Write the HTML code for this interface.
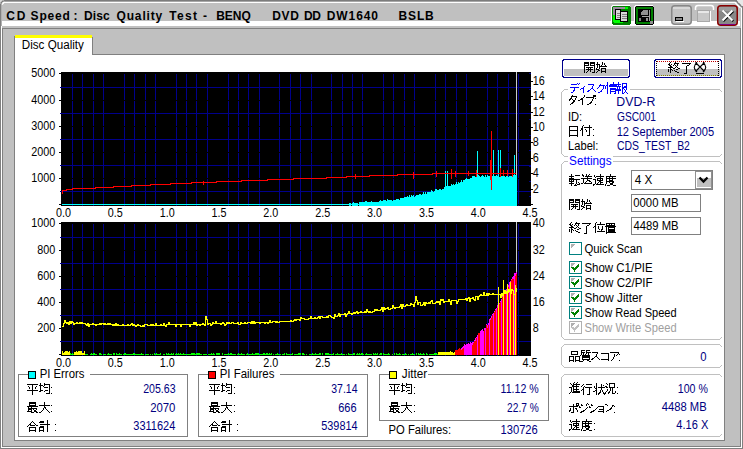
<!DOCTYPE html>
<html><head><meta charset="utf-8"><style>
html,body{margin:0;padding:0;width:743px;height:449px;overflow:hidden;background:#c0c0c0}
svg{display:block}
text{font-family:"Liberation Sans", sans-serif}
</style></head><body>
<svg width="743" height="449" viewBox="0 0 743 449" shape-rendering="crispEdges">
<rect x="0" y="0" width="743" height="449" fill="#c0c0c0" />
<rect x="0" y="0" width="743" height="1" fill="#7c7c7c" />
<rect x="1" y="1" width="741" height="1" fill="#a8a8a8" />
<rect x="2" y="2" width="739" height="1" fill="#ffffff" />
<rect x="0" y="0" width="1" height="449" fill="#808080" />
<rect x="1" y="1" width="1" height="25" fill="#b0b0b0" />
<rect x="1" y="26" width="1" height="422" fill="#ffffff" />
<rect x="2" y="28" width="1" height="419" fill="#808080" />
<rect x="742" y="0" width="1" height="449" fill="#808080" />
<rect x="741" y="2" width="1" height="446" fill="#ffffff" />
<rect x="740" y="28" width="1" height="419" fill="#808080" />
<rect x="0" y="448" width="743" height="1" fill="#808080" />
<rect x="1" y="447" width="741" height="1" fill="#ffffff" />
<rect x="2" y="446" width="739" height="1" fill="#808080" />
<path d="M736 0 L743 0 L743 7 Z" fill="#e8e8e8"/>
<path d="M735.5 0.5 L742.5 7.5" stroke="#7c7c7c" stroke-width="1.2" shape-rendering="geometricPrecision"/>
<path d="M735 2.5 L740.5 8" stroke="#ffffff" stroke-width="1.2" shape-rendering="geometricPrecision"/>
<path d="M0 0 L4 0 L0 4 Z" fill="#d8d8d8"/>
<path d="M3.5 0.5 L0.5 3.5" stroke="#7c7c7c" stroke-width="1.2" shape-rendering="geometricPrecision"/>
<path d="M4.5 2 L2 4.5" stroke="#ffffff" stroke-width="1.2" shape-rendering="geometricPrecision"/>
<rect x="2" y="21" width="738" height="5" fill="#ffffff" />
<rect x="2" y="28" width="739" height="1" fill="#808080" />
<text x="6.21" y="19.6" font-size="12" fill="#000" text-anchor="start" textLength="19.3" lengthAdjust="spacing" font-weight="bold" >CD</text>
<text x="30.55" y="19.6" font-size="12" fill="#000" text-anchor="start" textLength="39.34" lengthAdjust="spacing" font-weight="bold" >Speed</text>
<text x="73.45" y="19.6" font-size="12" fill="#000" text-anchor="start" textLength="4.81" lengthAdjust="spacing" font-weight="bold" >:</text>
<text x="84.1" y="19.6" font-size="12" fill="#000" text-anchor="start" textLength="25.65" lengthAdjust="spacing" font-weight="bold" >Disc</text>
<text x="116.51" y="19.6" font-size="12" fill="#000" text-anchor="start" textLength="45.76" lengthAdjust="spacing" font-weight="bold" >Quality</text>
<text x="169.37" y="19.6" font-size="12" fill="#000" text-anchor="start" textLength="27.68" lengthAdjust="spacing" font-weight="bold" >Test</text>
<text x="202.93" y="19.6" font-size="12" fill="#000" text-anchor="start" textLength="4.95" lengthAdjust="spacing" font-weight="bold" >-</text>
<text x="216.2" y="19.6" font-size="12" fill="#000" text-anchor="start" textLength="34.61" lengthAdjust="spacing" font-weight="bold" >BENQ</text>
<text x="272.2" y="19.6" font-size="12" fill="#000" text-anchor="start" textLength="26.61" lengthAdjust="spacing" font-weight="bold" >DVD</text>
<text x="304.0" y="19.6" font-size="12" fill="#000" text-anchor="start" textLength="16.91" lengthAdjust="spacing" font-weight="bold" >DD</text>
<text x="326.8" y="19.6" font-size="12" fill="#000" text-anchor="start" textLength="51.19" lengthAdjust="spacing" font-weight="bold" >DW1640</text>
<text x="398.5" y="19.6" font-size="12" fill="#000" text-anchor="start" textLength="35.25" lengthAdjust="spacing" font-weight="bold" >BSLB</text>
<rect x="612" y="5" width="18" height="1" fill="#ffffff" />
<rect x="611" y="6" width="1" height="18" fill="#ffffff" />
<rect x="612" y="6" width="19" height="19" rx="2.5" fill="#008000"/>
<path d="M613 8 Q613 7 614 7 L628 7 L628 9 L617 9 L617 20 L623 20 L623 23 L614 23 L613 22 Z" fill="#00ff00"/>
<rect x="613" y="7" width="12" height="2" fill="#9a8aa0" />
<rect x="613" y="7" width="2" height="8" fill="#9a8aa0" />
<rect x="615.5" y="9.5" width="5" height="10" fill="#d8d8d8" stroke="#000"/>
<rect x="617" y="13" width="3" height="1" fill="#808080" />
<rect x="617" y="15" width="3" height="1" fill="#808080" />
<rect x="617" y="17" width="3" height="1" fill="#808080" />
<rect x="620.5" y="11.5" width="7" height="10" fill="#d8d8d8" stroke="#000"/>
<rect x="622" y="14" width="5" height="1" fill="#808080" />
<rect x="622" y="16" width="5" height="1" fill="#808080" />
<rect x="622" y="18" width="5" height="1" fill="#808080" />
<rect x="635" y="5" width="18" height="1" fill="#ffffff" />
<rect x="634" y="6" width="1" height="18" fill="#ffffff" />
<rect x="635" y="6" width="19" height="19" rx="2.5" fill="#000"/>
<rect x="636" y="7" width="17" height="17" fill="#008000" />
<rect x="638" y="9" width="13" height="13" fill="#000" />
<path d="M641 12 L643 10 L648 10 L648 15 L641 15 Z" fill="#909090"/>
<rect x="642" y="16" width="8" height="1" fill="#a0a0a0" />
<rect x="649" y="10" width="1" height="11" fill="#a0a0a0" />
<rect x="639" y="18" width="2" height="3" fill="#808080" />
<rect x="646" y="18" width="2" height="3" fill="#909090" />
<rect x="650" y="21" width="3" height="3" fill="#909090" />
<rect x="671.75" y="5.75" width="19.5" height="18.5" rx="3" fill="#c4c4c4" stroke="#888" stroke-width="1.5" shape-rendering="geometricPrecision"/>
<rect x="673" y="7" width="17" height="2" fill="#d8d8d8" />
<rect x="675.5" y="17.5" width="7" height="3" fill="#8a8a8a" stroke="#000"/>
<rect x="676" y="21" width="8" height="1" fill="#ffffff" />
<path d="M695.5 10 L695.5 8 Q695.5 5.5 698 5.5 L711 5.5 Q713.5 5.5 713.5 8 L713.5 10" fill="none" stroke="#fff" stroke-width="1.5" shape-rendering="geometricPrecision"/>
<rect x="697.5" y="10.5" width="12" height="11" fill="#c8c8c8" stroke="#a8a8a8"/>
<rect x="698" y="11" width="11" height="2" fill="#e8e8e8" />
<rect x="697" y="22" width="13" height="1" fill="#ffffff" />
<rect x="710" y="11" width="1" height="12" fill="#ffffff" />
<rect x="717.75" y="5.75" width="19.5" height="19.5" rx="3" fill="#888" stroke="#8a0000" stroke-width="1.5" shape-rendering="geometricPrecision"/>
<rect x="719" y="7" width="17" height="4" fill="#9c9c9c" />
<path d="M722.5 10.5 L732.5 20.5 M732.5 10.5 L722.5 20.5" stroke="#000" stroke-width="2.2" transform="translate(0.7,0.7)" shape-rendering="geometricPrecision"/>
<path d="M722.5 10.5 L732.5 20.5 M732.5 10.5 L722.5 20.5" stroke="#fff" stroke-width="2" shape-rendering="geometricPrecision"/>
<rect x="720" y="24" width="15" height="1" fill="#800080" />
<rect x="15" y="38" width="77" height="17" fill="#ffffff" />
<rect x="15" y="35" width="77" height="3" fill="#ffff00" />
<rect x="14" y="36" width="1" height="19" fill="#808080" />
<rect x="92" y="37" width="1" height="18" fill="#808080" />
<text x="21.79" y="49" font-size="12" fill="#000" text-anchor="start" textLength="62.13" lengthAdjust="spacingAndGlyphs" >Disc Quality</text>
<rect x="15" y="55" width="709" height="385" fill="#ffffff" />
<rect x="14" y="54" width="1" height="387" fill="#808080" />
<rect x="92" y="54" width="633" height="1" fill="#808080" />
<rect x="724" y="54" width="1" height="387" fill="#808080" />
<rect x="14" y="440" width="711" height="1" fill="#808080" />
<rect x="61" y="72" width="470" height="134" fill="#000" />
<rect x="72" y="74" width="1" height="132" fill="#00008c" />
<rect x="82" y="74" width="1" height="132" fill="#00008c" />
<rect x="93" y="74" width="1" height="132" fill="#00008c" />
<rect x="103" y="74" width="1" height="132" fill="#00008c" />
<rect x="124" y="74" width="1" height="132" fill="#00008c" />
<rect x="134" y="74" width="1" height="132" fill="#00008c" />
<rect x="145" y="74" width="1" height="132" fill="#00008c" />
<rect x="155" y="74" width="1" height="132" fill="#00008c" />
<rect x="176" y="74" width="1" height="132" fill="#00008c" />
<rect x="186" y="74" width="1" height="132" fill="#00008c" />
<rect x="196" y="74" width="1" height="132" fill="#00008c" />
<rect x="207" y="74" width="1" height="132" fill="#00008c" />
<rect x="228" y="74" width="1" height="132" fill="#00008c" />
<rect x="238" y="74" width="1" height="132" fill="#00008c" />
<rect x="248" y="74" width="1" height="132" fill="#00008c" />
<rect x="259" y="74" width="1" height="132" fill="#00008c" />
<rect x="279" y="74" width="1" height="132" fill="#00008c" />
<rect x="290" y="74" width="1" height="132" fill="#00008c" />
<rect x="300" y="74" width="1" height="132" fill="#00008c" />
<rect x="311" y="74" width="1" height="132" fill="#00008c" />
<rect x="331" y="74" width="1" height="132" fill="#00008c" />
<rect x="342" y="74" width="1" height="132" fill="#00008c" />
<rect x="352" y="74" width="1" height="132" fill="#00008c" />
<rect x="362" y="74" width="1" height="132" fill="#00008c" />
<rect x="383" y="74" width="1" height="132" fill="#00008c" />
<rect x="393" y="74" width="1" height="132" fill="#00008c" />
<rect x="404" y="74" width="1" height="132" fill="#00008c" />
<rect x="414" y="74" width="1" height="132" fill="#00008c" />
<rect x="435" y="74" width="1" height="132" fill="#00008c" />
<rect x="445" y="74" width="1" height="132" fill="#00008c" />
<rect x="456" y="74" width="1" height="132" fill="#00008c" />
<rect x="466" y="74" width="1" height="132" fill="#00008c" />
<rect x="487" y="74" width="1" height="132" fill="#00008c" />
<rect x="497" y="74" width="1" height="132" fill="#00008c" />
<rect x="508" y="74" width="1" height="132" fill="#00008c" />
<rect x="518" y="74" width="1" height="132" fill="#00008c" />
<rect x="60" y="87" width="471" height="1" fill="#00008c" />
<rect x="60" y="113" width="471" height="1" fill="#00008c" />
<rect x="60" y="139" width="471" height="1" fill="#00008c" />
<rect x="60" y="165" width="471" height="1" fill="#00008c" />
<rect x="60" y="191" width="471" height="1" fill="#00008c" />
<rect x="61" y="100" width="470" height="1" fill="#000" />
<rect x="61" y="126" width="470" height="1" fill="#000" />
<rect x="61" y="152" width="470" height="1" fill="#000" />
<rect x="61" y="178" width="470" height="1" fill="#000" />
<rect x="61" y="204" width="470" height="1" fill="#000" />
<rect x="59" y="73" width="2" height="1" fill="#000" />
<rect x="59" y="100" width="2" height="1" fill="#000" />
<rect x="59" y="126" width="2" height="1" fill="#000" />
<rect x="59" y="152" width="2" height="1" fill="#000" />
<rect x="59" y="178" width="2" height="1" fill="#000" />
<rect x="59" y="204" width="2" height="1" fill="#000" />
<rect x="61" y="222" width="470" height="134" fill="#000" />
<rect x="72" y="224" width="1" height="132" fill="#00008c" />
<rect x="82" y="224" width="1" height="132" fill="#00008c" />
<rect x="93" y="224" width="1" height="132" fill="#00008c" />
<rect x="103" y="224" width="1" height="132" fill="#00008c" />
<rect x="124" y="224" width="1" height="132" fill="#00008c" />
<rect x="134" y="224" width="1" height="132" fill="#00008c" />
<rect x="145" y="224" width="1" height="132" fill="#00008c" />
<rect x="155" y="224" width="1" height="132" fill="#00008c" />
<rect x="176" y="224" width="1" height="132" fill="#00008c" />
<rect x="186" y="224" width="1" height="132" fill="#00008c" />
<rect x="196" y="224" width="1" height="132" fill="#00008c" />
<rect x="207" y="224" width="1" height="132" fill="#00008c" />
<rect x="228" y="224" width="1" height="132" fill="#00008c" />
<rect x="238" y="224" width="1" height="132" fill="#00008c" />
<rect x="248" y="224" width="1" height="132" fill="#00008c" />
<rect x="259" y="224" width="1" height="132" fill="#00008c" />
<rect x="279" y="224" width="1" height="132" fill="#00008c" />
<rect x="290" y="224" width="1" height="132" fill="#00008c" />
<rect x="300" y="224" width="1" height="132" fill="#00008c" />
<rect x="311" y="224" width="1" height="132" fill="#00008c" />
<rect x="331" y="224" width="1" height="132" fill="#00008c" />
<rect x="342" y="224" width="1" height="132" fill="#00008c" />
<rect x="352" y="224" width="1" height="132" fill="#00008c" />
<rect x="362" y="224" width="1" height="132" fill="#00008c" />
<rect x="383" y="224" width="1" height="132" fill="#00008c" />
<rect x="393" y="224" width="1" height="132" fill="#00008c" />
<rect x="404" y="224" width="1" height="132" fill="#00008c" />
<rect x="414" y="224" width="1" height="132" fill="#00008c" />
<rect x="435" y="224" width="1" height="132" fill="#00008c" />
<rect x="445" y="224" width="1" height="132" fill="#00008c" />
<rect x="456" y="224" width="1" height="132" fill="#00008c" />
<rect x="466" y="224" width="1" height="132" fill="#00008c" />
<rect x="487" y="224" width="1" height="132" fill="#00008c" />
<rect x="497" y="224" width="1" height="132" fill="#00008c" />
<rect x="508" y="224" width="1" height="132" fill="#00008c" />
<rect x="518" y="224" width="1" height="132" fill="#00008c" />
<rect x="60" y="237" width="471" height="1" fill="#00008c" />
<rect x="60" y="263" width="471" height="1" fill="#00008c" />
<rect x="60" y="289" width="471" height="1" fill="#00008c" />
<rect x="60" y="315" width="471" height="1" fill="#00008c" />
<rect x="60" y="341" width="471" height="1" fill="#00008c" />
<rect x="61" y="250" width="470" height="1" fill="#000" />
<rect x="61" y="276" width="470" height="1" fill="#000" />
<rect x="61" y="302" width="470" height="1" fill="#000" />
<rect x="61" y="328" width="470" height="1" fill="#000" />
<rect x="61" y="354" width="470" height="1" fill="#000" />
<rect x="59" y="223" width="2" height="1" fill="#000" />
<rect x="59" y="250" width="2" height="1" fill="#000" />
<rect x="59" y="276" width="2" height="1" fill="#000" />
<rect x="59" y="302" width="2" height="1" fill="#000" />
<rect x="59" y="328" width="2" height="1" fill="#000" />
<rect x="59" y="354" width="2" height="1" fill="#000" />
<rect x="516" y="72" width="1" height="134" fill="#c8c8c8" />
<rect x="62" y="204" width="1" height="1" fill="#00ffff" />
<rect x="63" y="204" width="1" height="1" fill="#00ffff" />
<rect x="64" y="204" width="1" height="1" fill="#00ffff" />
<rect x="65" y="204" width="1" height="1" fill="#00ffff" />
<rect x="66" y="204" width="1" height="1" fill="#00ffff" />
<rect x="67" y="204" width="1" height="1" fill="#00ffff" />
<rect x="68" y="204" width="1" height="1" fill="#00ffff" />
<rect x="69" y="204" width="1" height="1" fill="#00ffff" />
<rect x="70" y="204" width="1" height="1" fill="#00ffff" />
<rect x="71" y="204" width="1" height="1" fill="#00ffff" />
<rect x="72" y="204" width="1" height="1" fill="#00ffff" />
<rect x="73" y="204" width="1" height="1" fill="#00ffff" />
<rect x="74" y="204" width="1" height="1" fill="#00ffff" />
<rect x="75" y="204" width="1" height="1" fill="#00ffff" />
<rect x="76" y="204" width="1" height="1" fill="#00ffff" />
<rect x="77" y="204" width="1" height="1" fill="#00ffff" />
<rect x="78" y="204" width="1" height="1" fill="#00ffff" />
<rect x="79" y="204" width="1" height="1" fill="#00ffff" />
<rect x="80" y="204" width="1" height="1" fill="#00ffff" />
<rect x="81" y="204" width="1" height="1" fill="#00ffff" />
<rect x="82" y="204" width="1" height="1" fill="#00ffff" />
<rect x="83" y="204" width="1" height="1" fill="#00ffff" />
<rect x="84" y="204" width="1" height="1" fill="#00ffff" />
<rect x="85" y="204" width="1" height="1" fill="#00ffff" />
<rect x="86" y="204" width="1" height="1" fill="#00ffff" />
<rect x="87" y="204" width="1" height="1" fill="#00ffff" />
<rect x="88" y="204" width="1" height="1" fill="#00ffff" />
<rect x="89" y="204" width="1" height="1" fill="#00ffff" />
<rect x="90" y="204" width="1" height="1" fill="#00ffff" />
<rect x="91" y="204" width="1" height="1" fill="#00ffff" />
<rect x="92" y="204" width="1" height="1" fill="#00ffff" />
<rect x="93" y="204" width="1" height="1" fill="#00ffff" />
<rect x="94" y="204" width="1" height="1" fill="#00ffff" />
<rect x="95" y="204" width="1" height="1" fill="#00ffff" />
<rect x="96" y="204" width="1" height="1" fill="#00ffff" />
<rect x="97" y="204" width="1" height="1" fill="#00ffff" />
<rect x="98" y="204" width="1" height="1" fill="#00ffff" />
<rect x="99" y="204" width="1" height="1" fill="#00ffff" />
<rect x="100" y="204" width="1" height="1" fill="#00ffff" />
<rect x="101" y="204" width="1" height="1" fill="#00ffff" />
<rect x="102" y="204" width="1" height="1" fill="#00ffff" />
<rect x="103" y="204" width="1" height="1" fill="#00ffff" />
<rect x="104" y="204" width="1" height="1" fill="#00ffff" />
<rect x="105" y="204" width="1" height="1" fill="#00ffff" />
<rect x="106" y="204" width="1" height="1" fill="#00ffff" />
<rect x="107" y="204" width="1" height="1" fill="#00ffff" />
<rect x="108" y="204" width="1" height="1" fill="#00ffff" />
<rect x="109" y="204" width="1" height="1" fill="#00ffff" />
<rect x="110" y="204" width="1" height="1" fill="#00ffff" />
<rect x="111" y="204" width="1" height="1" fill="#00ffff" />
<rect x="112" y="204" width="1" height="1" fill="#00ffff" />
<rect x="113" y="204" width="1" height="1" fill="#00ffff" />
<rect x="114" y="204" width="1" height="1" fill="#00ffff" />
<rect x="115" y="204" width="1" height="1" fill="#00ffff" />
<rect x="116" y="204" width="1" height="1" fill="#00ffff" />
<rect x="117" y="204" width="1" height="1" fill="#00ffff" />
<rect x="118" y="204" width="1" height="1" fill="#00ffff" />
<rect x="119" y="204" width="1" height="1" fill="#00ffff" />
<rect x="120" y="204" width="1" height="1" fill="#00ffff" />
<rect x="121" y="204" width="1" height="1" fill="#00ffff" />
<rect x="122" y="204" width="1" height="1" fill="#00ffff" />
<rect x="123" y="204" width="1" height="1" fill="#00ffff" />
<rect x="124" y="204" width="1" height="1" fill="#00ffff" />
<rect x="125" y="204" width="1" height="1" fill="#00ffff" />
<rect x="126" y="204" width="1" height="1" fill="#00ffff" />
<rect x="127" y="204" width="1" height="1" fill="#00ffff" />
<rect x="128" y="204" width="1" height="1" fill="#00ffff" />
<rect x="129" y="204" width="1" height="1" fill="#00ffff" />
<rect x="130" y="204" width="1" height="1" fill="#00ffff" />
<rect x="131" y="204" width="1" height="1" fill="#00ffff" />
<rect x="132" y="204" width="1" height="1" fill="#00ffff" />
<rect x="133" y="204" width="1" height="1" fill="#00ffff" />
<rect x="134" y="204" width="1" height="1" fill="#00ffff" />
<rect x="135" y="204" width="1" height="1" fill="#00ffff" />
<rect x="136" y="204" width="1" height="1" fill="#00ffff" />
<rect x="137" y="204" width="1" height="1" fill="#00ffff" />
<rect x="138" y="204" width="1" height="1" fill="#00ffff" />
<rect x="139" y="204" width="1" height="1" fill="#00ffff" />
<rect x="140" y="204" width="1" height="1" fill="#00ffff" />
<rect x="141" y="204" width="1" height="1" fill="#00ffff" />
<rect x="142" y="204" width="1" height="1" fill="#00ffff" />
<rect x="143" y="204" width="1" height="1" fill="#00ffff" />
<rect x="144" y="204" width="1" height="1" fill="#00ffff" />
<rect x="145" y="204" width="1" height="1" fill="#00ffff" />
<rect x="146" y="204" width="1" height="1" fill="#00ffff" />
<rect x="147" y="204" width="1" height="1" fill="#00ffff" />
<rect x="148" y="204" width="1" height="1" fill="#00ffff" />
<rect x="149" y="204" width="1" height="1" fill="#00ffff" />
<rect x="150" y="204" width="1" height="1" fill="#00ffff" />
<rect x="151" y="204" width="1" height="1" fill="#00ffff" />
<rect x="152" y="204" width="1" height="1" fill="#00ffff" />
<rect x="153" y="204" width="1" height="1" fill="#00ffff" />
<rect x="154" y="204" width="1" height="1" fill="#00ffff" />
<rect x="155" y="204" width="1" height="1" fill="#00ffff" />
<rect x="156" y="204" width="1" height="1" fill="#00ffff" />
<rect x="157" y="204" width="1" height="1" fill="#00ffff" />
<rect x="158" y="204" width="1" height="1" fill="#00ffff" />
<rect x="159" y="204" width="1" height="1" fill="#00ffff" />
<rect x="160" y="204" width="1" height="1" fill="#00ffff" />
<rect x="161" y="204" width="1" height="1" fill="#00ffff" />
<rect x="162" y="204" width="1" height="1" fill="#00ffff" />
<rect x="163" y="204" width="1" height="1" fill="#00ffff" />
<rect x="164" y="204" width="1" height="1" fill="#00ffff" />
<rect x="165" y="204" width="1" height="1" fill="#00ffff" />
<rect x="166" y="204" width="1" height="1" fill="#00ffff" />
<rect x="167" y="204" width="1" height="1" fill="#00ffff" />
<rect x="168" y="204" width="1" height="1" fill="#00ffff" />
<rect x="169" y="204" width="1" height="1" fill="#00ffff" />
<rect x="170" y="204" width="1" height="1" fill="#00ffff" />
<rect x="171" y="204" width="1" height="1" fill="#00ffff" />
<rect x="172" y="204" width="1" height="1" fill="#00ffff" />
<rect x="173" y="204" width="1" height="1" fill="#00ffff" />
<rect x="174" y="204" width="1" height="1" fill="#00ffff" />
<rect x="175" y="204" width="1" height="1" fill="#00ffff" />
<rect x="176" y="204" width="1" height="1" fill="#00ffff" />
<rect x="177" y="204" width="1" height="1" fill="#00ffff" />
<rect x="178" y="204" width="1" height="1" fill="#00ffff" />
<rect x="179" y="204" width="1" height="1" fill="#00ffff" />
<rect x="180" y="204" width="1" height="1" fill="#00ffff" />
<rect x="181" y="204" width="1" height="1" fill="#00ffff" />
<rect x="182" y="204" width="1" height="1" fill="#00ffff" />
<rect x="183" y="204" width="1" height="1" fill="#00ffff" />
<rect x="184" y="204" width="1" height="1" fill="#00ffff" />
<rect x="185" y="204" width="1" height="1" fill="#00ffff" />
<rect x="186" y="204" width="1" height="1" fill="#00ffff" />
<rect x="187" y="204" width="1" height="1" fill="#00ffff" />
<rect x="188" y="204" width="1" height="1" fill="#00ffff" />
<rect x="189" y="204" width="1" height="1" fill="#00ffff" />
<rect x="190" y="204" width="1" height="1" fill="#00ffff" />
<rect x="191" y="204" width="1" height="1" fill="#00ffff" />
<rect x="192" y="204" width="1" height="1" fill="#00ffff" />
<rect x="193" y="204" width="1" height="1" fill="#00ffff" />
<rect x="194" y="204" width="1" height="1" fill="#00ffff" />
<rect x="195" y="204" width="1" height="1" fill="#00ffff" />
<rect x="196" y="204" width="1" height="1" fill="#00ffff" />
<rect x="197" y="204" width="1" height="1" fill="#00ffff" />
<rect x="198" y="204" width="1" height="1" fill="#00ffff" />
<rect x="199" y="204" width="1" height="1" fill="#00ffff" />
<rect x="200" y="204" width="1" height="1" fill="#00ffff" />
<rect x="201" y="204" width="1" height="1" fill="#00ffff" />
<rect x="202" y="204" width="1" height="1" fill="#00ffff" />
<rect x="203" y="204" width="1" height="1" fill="#00ffff" />
<rect x="204" y="204" width="1" height="1" fill="#00ffff" />
<rect x="205" y="204" width="1" height="1" fill="#00ffff" />
<rect x="206" y="204" width="1" height="1" fill="#00ffff" />
<rect x="207" y="204" width="1" height="1" fill="#00ffff" />
<rect x="208" y="204" width="1" height="1" fill="#00ffff" />
<rect x="209" y="204" width="1" height="1" fill="#00ffff" />
<rect x="210" y="204" width="1" height="1" fill="#00ffff" />
<rect x="211" y="204" width="1" height="1" fill="#00ffff" />
<rect x="212" y="204" width="1" height="1" fill="#00ffff" />
<rect x="213" y="204" width="1" height="1" fill="#00ffff" />
<rect x="214" y="204" width="1" height="1" fill="#00ffff" />
<rect x="215" y="204" width="1" height="1" fill="#00ffff" />
<rect x="216" y="204" width="1" height="1" fill="#00ffff" />
<rect x="217" y="204" width="1" height="1" fill="#00ffff" />
<rect x="218" y="204" width="1" height="1" fill="#00ffff" />
<rect x="219" y="204" width="1" height="1" fill="#00ffff" />
<rect x="220" y="204" width="1" height="1" fill="#00ffff" />
<rect x="221" y="204" width="1" height="1" fill="#00ffff" />
<rect x="222" y="204" width="1" height="1" fill="#00ffff" />
<rect x="223" y="204" width="1" height="1" fill="#00ffff" />
<rect x="224" y="204" width="1" height="1" fill="#00ffff" />
<rect x="225" y="204" width="1" height="1" fill="#00ffff" />
<rect x="226" y="204" width="1" height="1" fill="#00ffff" />
<rect x="227" y="204" width="1" height="1" fill="#00ffff" />
<rect x="228" y="204" width="1" height="1" fill="#00ffff" />
<rect x="229" y="204" width="1" height="1" fill="#00ffff" />
<rect x="230" y="204" width="1" height="1" fill="#00ffff" />
<rect x="231" y="204" width="1" height="1" fill="#00ffff" />
<rect x="232" y="204" width="1" height="1" fill="#00ffff" />
<rect x="233" y="204" width="1" height="1" fill="#00ffff" />
<rect x="234" y="204" width="1" height="1" fill="#00ffff" />
<rect x="235" y="204" width="1" height="1" fill="#00ffff" />
<rect x="236" y="204" width="1" height="1" fill="#00ffff" />
<rect x="237" y="204" width="1" height="1" fill="#00ffff" />
<rect x="238" y="204" width="1" height="1" fill="#00ffff" />
<rect x="239" y="204" width="1" height="1" fill="#00ffff" />
<rect x="240" y="204" width="1" height="1" fill="#00ffff" />
<rect x="241" y="204" width="1" height="1" fill="#00ffff" />
<rect x="242" y="204" width="1" height="1" fill="#00ffff" />
<rect x="243" y="204" width="1" height="1" fill="#00ffff" />
<rect x="244" y="204" width="1" height="1" fill="#00ffff" />
<rect x="245" y="204" width="1" height="1" fill="#00ffff" />
<rect x="246" y="204" width="1" height="1" fill="#00ffff" />
<rect x="247" y="204" width="1" height="1" fill="#00ffff" />
<rect x="248" y="204" width="1" height="1" fill="#00ffff" />
<rect x="249" y="204" width="1" height="1" fill="#00ffff" />
<rect x="250" y="204" width="1" height="1" fill="#00ffff" />
<rect x="251" y="204" width="1" height="1" fill="#00ffff" />
<rect x="252" y="204" width="1" height="1" fill="#00ffff" />
<rect x="253" y="204" width="1" height="1" fill="#00ffff" />
<rect x="254" y="204" width="1" height="1" fill="#00ffff" />
<rect x="255" y="204" width="1" height="1" fill="#00ffff" />
<rect x="256" y="204" width="1" height="1" fill="#00ffff" />
<rect x="257" y="204" width="1" height="1" fill="#00ffff" />
<rect x="258" y="204" width="1" height="1" fill="#00ffff" />
<rect x="259" y="204" width="1" height="1" fill="#00ffff" />
<rect x="260" y="204" width="1" height="1" fill="#00ffff" />
<rect x="261" y="204" width="1" height="1" fill="#00ffff" />
<rect x="262" y="204" width="1" height="1" fill="#00ffff" />
<rect x="263" y="204" width="1" height="1" fill="#00ffff" />
<rect x="264" y="204" width="1" height="1" fill="#00ffff" />
<rect x="265" y="204" width="1" height="1" fill="#00ffff" />
<rect x="266" y="204" width="1" height="1" fill="#00ffff" />
<rect x="267" y="204" width="1" height="1" fill="#00ffff" />
<rect x="268" y="204" width="1" height="1" fill="#00ffff" />
<rect x="269" y="204" width="1" height="1" fill="#00ffff" />
<rect x="270" y="204" width="1" height="1" fill="#00ffff" />
<rect x="271" y="204" width="1" height="1" fill="#00ffff" />
<rect x="272" y="204" width="1" height="1" fill="#00ffff" />
<rect x="273" y="204" width="1" height="1" fill="#00ffff" />
<rect x="274" y="204" width="1" height="1" fill="#00ffff" />
<rect x="275" y="204" width="1" height="1" fill="#00ffff" />
<rect x="276" y="204" width="1" height="1" fill="#00ffff" />
<rect x="277" y="204" width="1" height="1" fill="#00ffff" />
<rect x="278" y="204" width="1" height="1" fill="#00ffff" />
<rect x="279" y="204" width="1" height="1" fill="#00ffff" />
<rect x="280" y="204" width="1" height="1" fill="#00ffff" />
<rect x="281" y="204" width="1" height="1" fill="#00ffff" />
<rect x="282" y="204" width="1" height="1" fill="#00ffff" />
<rect x="283" y="204" width="1" height="1" fill="#00ffff" />
<rect x="284" y="204" width="1" height="1" fill="#00ffff" />
<rect x="285" y="204" width="1" height="1" fill="#00ffff" />
<rect x="286" y="204" width="1" height="1" fill="#00ffff" />
<rect x="287" y="204" width="1" height="1" fill="#00ffff" />
<rect x="288" y="204" width="1" height="1" fill="#00ffff" />
<rect x="289" y="204" width="1" height="1" fill="#00ffff" />
<rect x="290" y="204" width="1" height="1" fill="#00ffff" />
<rect x="291" y="204" width="1" height="1" fill="#00ffff" />
<rect x="292" y="204" width="1" height="1" fill="#00ffff" />
<rect x="293" y="204" width="1" height="1" fill="#00ffff" />
<rect x="294" y="204" width="1" height="1" fill="#00ffff" />
<rect x="295" y="204" width="1" height="1" fill="#00ffff" />
<rect x="296" y="204" width="1" height="1" fill="#00ffff" />
<rect x="297" y="204" width="1" height="1" fill="#00ffff" />
<rect x="298" y="204" width="1" height="1" fill="#00ffff" />
<rect x="299" y="204" width="1" height="1" fill="#00ffff" />
<rect x="300" y="204" width="1" height="1" fill="#00ffff" />
<rect x="301" y="204" width="1" height="1" fill="#00ffff" />
<rect x="302" y="204" width="1" height="1" fill="#00ffff" />
<rect x="303" y="204" width="1" height="1" fill="#00ffff" />
<rect x="304" y="204" width="1" height="1" fill="#00ffff" />
<rect x="305" y="204" width="1" height="1" fill="#00ffff" />
<rect x="306" y="204" width="1" height="1" fill="#00ffff" />
<rect x="307" y="204" width="1" height="1" fill="#00ffff" />
<rect x="308" y="204" width="1" height="1" fill="#00ffff" />
<rect x="309" y="204" width="1" height="1" fill="#00ffff" />
<rect x="310" y="204" width="1" height="1" fill="#00ffff" />
<rect x="311" y="204" width="1" height="1" fill="#00ffff" />
<rect x="312" y="204" width="1" height="1" fill="#00ffff" />
<rect x="313" y="204" width="1" height="1" fill="#00ffff" />
<rect x="314" y="204" width="1" height="1" fill="#00ffff" />
<rect x="315" y="204" width="1" height="1" fill="#00ffff" />
<rect x="316" y="204" width="1" height="1" fill="#00ffff" />
<rect x="317" y="204" width="1" height="1" fill="#00ffff" />
<rect x="318" y="204" width="1" height="1" fill="#00ffff" />
<rect x="319" y="204" width="1" height="1" fill="#00ffff" />
<rect x="320" y="204" width="1" height="1" fill="#00ffff" />
<rect x="321" y="204" width="1" height="1" fill="#00ffff" />
<rect x="322" y="204" width="1" height="1" fill="#00ffff" />
<rect x="323" y="204" width="1" height="1" fill="#00ffff" />
<rect x="324" y="204" width="1" height="1" fill="#00ffff" />
<rect x="325" y="204" width="1" height="1" fill="#00ffff" />
<rect x="326" y="204" width="1" height="1" fill="#00ffff" />
<rect x="327" y="204" width="1" height="1" fill="#00ffff" />
<rect x="328" y="204" width="1" height="1" fill="#00ffff" />
<rect x="329" y="204" width="1" height="1" fill="#00ffff" />
<rect x="330" y="204" width="1" height="1" fill="#00ffff" />
<rect x="331" y="204" width="1" height="1" fill="#00ffff" />
<rect x="332" y="204" width="1" height="1" fill="#00ffff" />
<rect x="333" y="204" width="1" height="1" fill="#00ffff" />
<rect x="334" y="204" width="1" height="1" fill="#00ffff" />
<rect x="335" y="204" width="1" height="1" fill="#00ffff" />
<rect x="336" y="204" width="1" height="1" fill="#00ffff" />
<rect x="337" y="204" width="1" height="1" fill="#00ffff" />
<rect x="338" y="204" width="1" height="1" fill="#00ffff" />
<rect x="339" y="204" width="1" height="1" fill="#00ffff" />
<rect x="340" y="204" width="1" height="1" fill="#00ffff" />
<rect x="341" y="204" width="1" height="1" fill="#00ffff" />
<rect x="342" y="204" width="1" height="1" fill="#00ffff" />
<rect x="343" y="204" width="1" height="1" fill="#00ffff" />
<rect x="344" y="204" width="1" height="1" fill="#00ffff" />
<rect x="345" y="204" width="1" height="1" fill="#00ffff" />
<rect x="346" y="204" width="1" height="1" fill="#00ffff" />
<rect x="347" y="204" width="1" height="1" fill="#00ffff" />
<rect x="348" y="204" width="1" height="1" fill="#00ffff" />
<rect x="349" y="203" width="1" height="3" fill="#00ffff" />
<rect x="350" y="203" width="1" height="3" fill="#00ffff" />
<rect x="351" y="204" width="1" height="1" fill="#00ffff" />
<rect x="352" y="203" width="1" height="3" fill="#00ffff" />
<rect x="353" y="202" width="1" height="4" fill="#00ffff" />
<rect x="354" y="203" width="1" height="3" fill="#00ffff" />
<rect x="355" y="203" width="1" height="3" fill="#00ffff" />
<rect x="356" y="203" width="1" height="3" fill="#00ffff" />
<rect x="357" y="203" width="1" height="3" fill="#00ffff" />
<rect x="358" y="204" width="1" height="1" fill="#00ffff" />
<rect x="359" y="202" width="1" height="4" fill="#00ffff" />
<rect x="360" y="202" width="1" height="4" fill="#00ffff" />
<rect x="361" y="202" width="1" height="4" fill="#00ffff" />
<rect x="362" y="202" width="1" height="4" fill="#00ffff" />
<rect x="363" y="202" width="1" height="4" fill="#00ffff" />
<rect x="364" y="202" width="1" height="4" fill="#00ffff" />
<rect x="365" y="201" width="1" height="5" fill="#00ffff" />
<rect x="366" y="201" width="1" height="5" fill="#00ffff" />
<rect x="367" y="202" width="1" height="4" fill="#00ffff" />
<rect x="368" y="202" width="1" height="4" fill="#00ffff" />
<rect x="369" y="202" width="1" height="4" fill="#00ffff" />
<rect x="370" y="202" width="1" height="4" fill="#00ffff" />
<rect x="371" y="201" width="1" height="5" fill="#00ffff" />
<rect x="372" y="202" width="1" height="4" fill="#00ffff" />
<rect x="373" y="202" width="1" height="4" fill="#00ffff" />
<rect x="374" y="202" width="1" height="4" fill="#00ffff" />
<rect x="375" y="202" width="1" height="4" fill="#00ffff" />
<rect x="376" y="202" width="1" height="4" fill="#00ffff" />
<rect x="377" y="202" width="1" height="4" fill="#00ffff" />
<rect x="378" y="202" width="1" height="4" fill="#00ffff" />
<rect x="379" y="201" width="1" height="5" fill="#00ffff" />
<rect x="380" y="200" width="1" height="6" fill="#00ffff" />
<rect x="381" y="201" width="1" height="5" fill="#00ffff" />
<rect x="382" y="201" width="1" height="5" fill="#00ffff" />
<rect x="383" y="200" width="1" height="6" fill="#00ffff" />
<rect x="384" y="200" width="1" height="6" fill="#00ffff" />
<rect x="385" y="200" width="1" height="6" fill="#00ffff" />
<rect x="386" y="201" width="1" height="5" fill="#00ffff" />
<rect x="387" y="199" width="1" height="7" fill="#00ffff" />
<rect x="388" y="200" width="1" height="6" fill="#00ffff" />
<rect x="389" y="200" width="1" height="6" fill="#00ffff" />
<rect x="390" y="200" width="1" height="6" fill="#00ffff" />
<rect x="391" y="200" width="1" height="6" fill="#00ffff" />
<rect x="392" y="201" width="1" height="5" fill="#00ffff" />
<rect x="393" y="200" width="1" height="6" fill="#00ffff" />
<rect x="394" y="200" width="1" height="6" fill="#00ffff" />
<rect x="395" y="200" width="1" height="6" fill="#00ffff" />
<rect x="396" y="199" width="1" height="7" fill="#00ffff" />
<rect x="397" y="199" width="1" height="7" fill="#00ffff" />
<rect x="398" y="199" width="1" height="7" fill="#00ffff" />
<rect x="399" y="200" width="1" height="6" fill="#00ffff" />
<rect x="400" y="198" width="1" height="8" fill="#00ffff" />
<rect x="401" y="198" width="1" height="8" fill="#00ffff" />
<rect x="402" y="198" width="1" height="8" fill="#00ffff" />
<rect x="403" y="198" width="1" height="8" fill="#00ffff" />
<rect x="404" y="197" width="1" height="9" fill="#00ffff" />
<rect x="405" y="197" width="1" height="9" fill="#00ffff" />
<rect x="406" y="197" width="1" height="9" fill="#00ffff" />
<rect x="407" y="196" width="1" height="10" fill="#00ffff" />
<rect x="408" y="197" width="1" height="9" fill="#00ffff" />
<rect x="409" y="195" width="1" height="11" fill="#00ffff" />
<rect x="410" y="197" width="1" height="9" fill="#00ffff" />
<rect x="411" y="195" width="1" height="11" fill="#00ffff" />
<rect x="412" y="196" width="1" height="10" fill="#00ffff" />
<rect x="413" y="195" width="1" height="11" fill="#00ffff" />
<rect x="414" y="197" width="1" height="9" fill="#00ffff" />
<rect x="415" y="196" width="1" height="10" fill="#00ffff" />
<rect x="416" y="195" width="1" height="11" fill="#00ffff" />
<rect x="417" y="195" width="1" height="11" fill="#00ffff" />
<rect x="418" y="195" width="1" height="11" fill="#00ffff" />
<rect x="419" y="194" width="1" height="12" fill="#00ffff" />
<rect x="420" y="194" width="1" height="12" fill="#00ffff" />
<rect x="421" y="195" width="1" height="11" fill="#00ffff" />
<rect x="422" y="194" width="1" height="12" fill="#00ffff" />
<rect x="423" y="192" width="1" height="14" fill="#00ffff" />
<rect x="424" y="194" width="1" height="12" fill="#00ffff" />
<rect x="425" y="192" width="1" height="14" fill="#00ffff" />
<rect x="426" y="194" width="1" height="12" fill="#00ffff" />
<rect x="427" y="192" width="1" height="14" fill="#00ffff" />
<rect x="428" y="192" width="1" height="14" fill="#00ffff" />
<rect x="429" y="192" width="1" height="14" fill="#00ffff" />
<rect x="430" y="192" width="1" height="14" fill="#00ffff" />
<rect x="431" y="190" width="1" height="16" fill="#00ffff" />
<rect x="432" y="191" width="1" height="15" fill="#00ffff" />
<rect x="433" y="192" width="1" height="14" fill="#00ffff" />
<rect x="434" y="191" width="1" height="15" fill="#00ffff" />
<rect x="435" y="189" width="1" height="17" fill="#00ffff" />
<rect x="436" y="189" width="1" height="17" fill="#00ffff" />
<rect x="437" y="190" width="1" height="16" fill="#00ffff" />
<rect x="438" y="190" width="1" height="16" fill="#00ffff" />
<rect x="439" y="189" width="1" height="17" fill="#00ffff" />
<rect x="440" y="189" width="1" height="17" fill="#00ffff" />
<rect x="441" y="190" width="1" height="16" fill="#00ffff" />
<rect x="442" y="189" width="1" height="17" fill="#00ffff" />
<rect x="443" y="189" width="1" height="17" fill="#00ffff" />
<rect x="444" y="187" width="1" height="19" fill="#00ffff" />
<rect x="445" y="171" width="1" height="35" fill="#00ffff" />
<rect x="446" y="186" width="1" height="20" fill="#00ffff" />
<rect x="447" y="171" width="1" height="35" fill="#00ffff" />
<rect x="448" y="186" width="1" height="20" fill="#00ffff" />
<rect x="449" y="186" width="1" height="20" fill="#00ffff" />
<rect x="450" y="186" width="1" height="20" fill="#00ffff" />
<rect x="451" y="184" width="1" height="22" fill="#00ffff" />
<rect x="452" y="185" width="1" height="21" fill="#00ffff" />
<rect x="453" y="184" width="1" height="22" fill="#00ffff" />
<rect x="454" y="185" width="1" height="21" fill="#00ffff" />
<rect x="455" y="184" width="1" height="22" fill="#00ffff" />
<rect x="456" y="182" width="1" height="24" fill="#00ffff" />
<rect x="457" y="184" width="1" height="22" fill="#00ffff" />
<rect x="458" y="182" width="1" height="24" fill="#00ffff" />
<rect x="459" y="183" width="1" height="23" fill="#00ffff" />
<rect x="460" y="182" width="1" height="24" fill="#00ffff" />
<rect x="461" y="180" width="1" height="26" fill="#00ffff" />
<rect x="462" y="182" width="1" height="24" fill="#00ffff" />
<rect x="463" y="180" width="1" height="26" fill="#00ffff" />
<rect x="464" y="180" width="1" height="26" fill="#00ffff" />
<rect x="465" y="179" width="1" height="27" fill="#00ffff" />
<rect x="466" y="178" width="1" height="28" fill="#00ffff" />
<rect x="467" y="179" width="1" height="27" fill="#00ffff" />
<rect x="468" y="179" width="1" height="27" fill="#00ffff" />
<rect x="469" y="179" width="1" height="27" fill="#00ffff" />
<rect x="470" y="178" width="1" height="28" fill="#00ffff" />
<rect x="471" y="178" width="1" height="28" fill="#00ffff" />
<rect x="472" y="176" width="1" height="30" fill="#00ffff" />
<rect x="473" y="176" width="1" height="30" fill="#00ffff" />
<rect x="474" y="176" width="1" height="30" fill="#00ffff" />
<rect x="475" y="177" width="1" height="29" fill="#00ffff" />
<rect x="476" y="176" width="1" height="30" fill="#00ffff" />
<rect x="477" y="151" width="1" height="55" fill="#00ffff" />
<rect x="478" y="175" width="1" height="31" fill="#00ffff" />
<rect x="479" y="176" width="1" height="30" fill="#00ffff" />
<rect x="480" y="177" width="1" height="29" fill="#00ffff" />
<rect x="481" y="176" width="1" height="30" fill="#00ffff" />
<rect x="482" y="175" width="1" height="31" fill="#00ffff" />
<rect x="483" y="176" width="1" height="30" fill="#00ffff" />
<rect x="484" y="177" width="1" height="29" fill="#00ffff" />
<rect x="485" y="175" width="1" height="31" fill="#00ffff" />
<rect x="486" y="177" width="1" height="29" fill="#00ffff" />
<rect x="487" y="175" width="1" height="31" fill="#00ffff" />
<rect x="488" y="176" width="1" height="30" fill="#00ffff" />
<rect x="489" y="176" width="1" height="30" fill="#00ffff" />
<rect x="490" y="176" width="1" height="30" fill="#00ffff" />
<rect x="491" y="150" width="1" height="56" fill="#00ffff" />
<rect x="492" y="176" width="1" height="30" fill="#00ffff" />
<rect x="493" y="150" width="1" height="56" fill="#00ffff" />
<rect x="494" y="176" width="1" height="30" fill="#00ffff" />
<rect x="495" y="176" width="1" height="30" fill="#00ffff" />
<rect x="496" y="175" width="1" height="31" fill="#00ffff" />
<rect x="497" y="176" width="1" height="30" fill="#00ffff" />
<rect x="498" y="150" width="1" height="56" fill="#00ffff" />
<rect x="499" y="177" width="1" height="29" fill="#00ffff" />
<rect x="500" y="150" width="1" height="56" fill="#00ffff" />
<rect x="501" y="176" width="1" height="30" fill="#00ffff" />
<rect x="502" y="176" width="1" height="30" fill="#00ffff" />
<rect x="503" y="175" width="1" height="31" fill="#00ffff" />
<rect x="504" y="176" width="1" height="30" fill="#00ffff" />
<rect x="505" y="177" width="1" height="29" fill="#00ffff" />
<rect x="506" y="176" width="1" height="30" fill="#00ffff" />
<rect x="507" y="176" width="1" height="30" fill="#00ffff" />
<rect x="508" y="177" width="1" height="29" fill="#00ffff" />
<rect x="509" y="176" width="1" height="30" fill="#00ffff" />
<rect x="510" y="176" width="1" height="30" fill="#00ffff" />
<rect x="511" y="176" width="1" height="30" fill="#00ffff" />
<rect x="512" y="176" width="1" height="30" fill="#00ffff" />
<rect x="513" y="175" width="1" height="31" fill="#00ffff" />
<rect x="514" y="155" width="1" height="51" fill="#00ffff" />
<rect x="515" y="175" width="1" height="31" fill="#00ffff" />
<rect x="516" y="175" width="1" height="31" fill="#00ffff" />
<path d="M62 190 H66 V189 H72 V188 H95 V187 H113 V186 H131 V185 H150 V184 H170 V183 H191 V182 H216 V181 H241 V180 H267 V179 H293 V178 H326 V177 H346 V176 H369 V175 H397 V174 H432 V173 H516" transform="translate(0,0.5)" fill="none" stroke="#ff0000" stroke-width="1" shape-rendering="crispEdges"/>
<rect x="62" y="190" width="1" height="4" fill="#ff0000" />
<rect x="451" y="169" width="1" height="10" fill="#ff0000" />
<rect x="455" y="171" width="1" height="6" fill="#ff0000" />
<rect x="468" y="171" width="1" height="5" fill="#ff0000" />
<rect x="476" y="170" width="1" height="7" fill="#ff0000" />
<rect x="491" y="131" width="1" height="59" fill="#ff0000" />
<rect x="500" y="168" width="1" height="9" fill="#ff0000" />
<rect x="503" y="170" width="1" height="6" fill="#ff0000" />
<rect x="507" y="170" width="1" height="6" fill="#ff0000" />
<rect x="512" y="169" width="1" height="8" fill="#ff0000" />
<rect x="413" y="172" width="1" height="7" fill="#ff0000" />
<rect x="436" y="171" width="1" height="6" fill="#ff0000" />
<rect x="355" y="174" width="1" height="5" fill="#ff0000" />
<rect x="203" y="181" width="1" height="4" fill="#ff0000" />
<rect x="490" y="160" width="2" height="20" fill="#ff0000" />
<rect x="62" y="353" width="1" height="2" fill="#00ff00" />
<rect x="63" y="353" width="1" height="2" fill="#00ff00" />
<rect x="64" y="353" width="1" height="2" fill="#00ff00" />
<rect x="65" y="354" width="1" height="1" fill="#00ff00" />
<rect x="66" y="353" width="1" height="2" fill="#00ff00" />
<rect x="67" y="353" width="1" height="2" fill="#00ff00" />
<rect x="68" y="353" width="1" height="2" fill="#00ff00" />
<rect x="70" y="353" width="1" height="2" fill="#00ff00" />
<rect x="71" y="354" width="1" height="1" fill="#00ff00" />
<rect x="72" y="353" width="1" height="2" fill="#00ff00" />
<rect x="73" y="354" width="1" height="1" fill="#00ff00" />
<rect x="74" y="354" width="1" height="1" fill="#00ff00" />
<rect x="75" y="353" width="1" height="2" fill="#00ff00" />
<rect x="76" y="353" width="1" height="2" fill="#00ff00" />
<rect x="77" y="353" width="1" height="2" fill="#00ff00" />
<rect x="78" y="354" width="1" height="1" fill="#00ff00" />
<rect x="79" y="353" width="1" height="2" fill="#00ff00" />
<rect x="80" y="353" width="1" height="2" fill="#00ff00" />
<rect x="81" y="354" width="1" height="1" fill="#00ff00" />
<rect x="83" y="353" width="1" height="2" fill="#00ff00" />
<rect x="84" y="353" width="1" height="2" fill="#00ff00" />
<rect x="85" y="354" width="1" height="1" fill="#00ff00" />
<rect x="86" y="354" width="1" height="1" fill="#00ff00" />
<rect x="87" y="354" width="1" height="1" fill="#00ff00" />
<rect x="90" y="354" width="1" height="1" fill="#00ff00" />
<rect x="91" y="353" width="1" height="2" fill="#00ff00" />
<rect x="92" y="354" width="1" height="1" fill="#00ff00" />
<rect x="93" y="353" width="1" height="2" fill="#00ff00" />
<rect x="94" y="353" width="1" height="2" fill="#00ff00" />
<rect x="95" y="354" width="1" height="1" fill="#00ff00" />
<rect x="96" y="354" width="1" height="1" fill="#00ff00" />
<rect x="99" y="353" width="1" height="2" fill="#00ff00" />
<rect x="100" y="353" width="1" height="2" fill="#00ff00" />
<rect x="101" y="354" width="1" height="1" fill="#00ff00" />
<rect x="103" y="354" width="1" height="1" fill="#00ff00" />
<rect x="104" y="354" width="1" height="1" fill="#00ff00" />
<rect x="105" y="354" width="1" height="1" fill="#00ff00" />
<rect x="107" y="354" width="1" height="1" fill="#00ff00" />
<rect x="108" y="353" width="1" height="2" fill="#00ff00" />
<rect x="109" y="354" width="1" height="1" fill="#00ff00" />
<rect x="110" y="354" width="1" height="1" fill="#00ff00" />
<rect x="111" y="354" width="1" height="1" fill="#00ff00" />
<rect x="113" y="353" width="1" height="2" fill="#00ff00" />
<rect x="114" y="353" width="1" height="2" fill="#00ff00" />
<rect x="116" y="353" width="1" height="2" fill="#00ff00" />
<rect x="117" y="354" width="1" height="1" fill="#00ff00" />
<rect x="118" y="354" width="1" height="1" fill="#00ff00" />
<rect x="119" y="353" width="1" height="2" fill="#00ff00" />
<rect x="120" y="354" width="1" height="1" fill="#00ff00" />
<rect x="121" y="354" width="1" height="1" fill="#00ff00" />
<rect x="123" y="354" width="1" height="1" fill="#00ff00" />
<rect x="124" y="353" width="1" height="2" fill="#00ff00" />
<rect x="125" y="353" width="1" height="2" fill="#00ff00" />
<rect x="126" y="354" width="1" height="1" fill="#00ff00" />
<rect x="127" y="354" width="1" height="1" fill="#00ff00" />
<rect x="128" y="354" width="1" height="1" fill="#00ff00" />
<rect x="129" y="354" width="1" height="1" fill="#00ff00" />
<rect x="130" y="354" width="1" height="1" fill="#00ff00" />
<rect x="131" y="354" width="1" height="1" fill="#00ff00" />
<rect x="132" y="354" width="1" height="1" fill="#00ff00" />
<rect x="133" y="353" width="1" height="2" fill="#00ff00" />
<rect x="134" y="353" width="1" height="2" fill="#00ff00" />
<rect x="135" y="354" width="1" height="1" fill="#00ff00" />
<rect x="136" y="354" width="1" height="1" fill="#00ff00" />
<rect x="137" y="354" width="1" height="1" fill="#00ff00" />
<rect x="138" y="354" width="1" height="1" fill="#00ff00" />
<rect x="139" y="354" width="1" height="1" fill="#00ff00" />
<rect x="140" y="354" width="1" height="1" fill="#00ff00" />
<rect x="141" y="353" width="1" height="2" fill="#00ff00" />
<rect x="142" y="354" width="1" height="1" fill="#00ff00" />
<rect x="143" y="354" width="1" height="1" fill="#00ff00" />
<rect x="145" y="354" width="1" height="1" fill="#00ff00" />
<rect x="146" y="354" width="1" height="1" fill="#00ff00" />
<rect x="147" y="354" width="1" height="1" fill="#00ff00" />
<rect x="148" y="354" width="1" height="1" fill="#00ff00" />
<rect x="150" y="354" width="1" height="1" fill="#00ff00" />
<rect x="152" y="354" width="1" height="1" fill="#00ff00" />
<rect x="154" y="353" width="1" height="2" fill="#00ff00" />
<rect x="155" y="354" width="1" height="1" fill="#00ff00" />
<rect x="156" y="353" width="1" height="2" fill="#00ff00" />
<rect x="157" y="354" width="1" height="1" fill="#00ff00" />
<rect x="158" y="354" width="1" height="1" fill="#00ff00" />
<rect x="159" y="354" width="1" height="1" fill="#00ff00" />
<rect x="160" y="353" width="1" height="2" fill="#00ff00" />
<rect x="163" y="354" width="1" height="1" fill="#00ff00" />
<rect x="164" y="354" width="1" height="1" fill="#00ff00" />
<rect x="166" y="353" width="1" height="2" fill="#00ff00" />
<rect x="167" y="354" width="1" height="1" fill="#00ff00" />
<rect x="168" y="353" width="1" height="2" fill="#00ff00" />
<rect x="169" y="354" width="1" height="1" fill="#00ff00" />
<rect x="170" y="354" width="1" height="1" fill="#00ff00" />
<rect x="171" y="353" width="1" height="2" fill="#00ff00" />
<rect x="172" y="354" width="1" height="1" fill="#00ff00" />
<rect x="173" y="353" width="1" height="2" fill="#00ff00" />
<rect x="175" y="354" width="1" height="1" fill="#00ff00" />
<rect x="176" y="353" width="1" height="2" fill="#00ff00" />
<rect x="177" y="354" width="1" height="1" fill="#00ff00" />
<rect x="178" y="353" width="1" height="2" fill="#00ff00" />
<rect x="179" y="354" width="1" height="1" fill="#00ff00" />
<rect x="180" y="353" width="1" height="2" fill="#00ff00" />
<rect x="181" y="354" width="1" height="1" fill="#00ff00" />
<rect x="182" y="354" width="1" height="1" fill="#00ff00" />
<rect x="183" y="353" width="1" height="2" fill="#00ff00" />
<rect x="184" y="354" width="1" height="1" fill="#00ff00" />
<rect x="185" y="354" width="1" height="1" fill="#00ff00" />
<rect x="186" y="354" width="1" height="1" fill="#00ff00" />
<rect x="187" y="354" width="1" height="1" fill="#00ff00" />
<rect x="188" y="354" width="1" height="1" fill="#00ff00" />
<rect x="189" y="354" width="1" height="1" fill="#00ff00" />
<rect x="190" y="354" width="1" height="1" fill="#00ff00" />
<rect x="191" y="353" width="1" height="2" fill="#00ff00" />
<rect x="192" y="353" width="1" height="2" fill="#00ff00" />
<rect x="193" y="353" width="1" height="2" fill="#00ff00" />
<rect x="194" y="353" width="1" height="2" fill="#00ff00" />
<rect x="195" y="354" width="1" height="1" fill="#00ff00" />
<rect x="196" y="353" width="1" height="2" fill="#00ff00" />
<rect x="197" y="353" width="1" height="2" fill="#00ff00" />
<rect x="198" y="353" width="1" height="2" fill="#00ff00" />
<rect x="199" y="353" width="1" height="2" fill="#00ff00" />
<rect x="200" y="354" width="1" height="1" fill="#00ff00" />
<rect x="201" y="354" width="1" height="1" fill="#00ff00" />
<rect x="203" y="354" width="1" height="1" fill="#00ff00" />
<rect x="204" y="354" width="1" height="1" fill="#00ff00" />
<rect x="205" y="354" width="1" height="1" fill="#00ff00" />
<rect x="206" y="354" width="1" height="1" fill="#00ff00" />
<rect x="208" y="354" width="1" height="1" fill="#00ff00" />
<rect x="209" y="354" width="1" height="1" fill="#00ff00" />
<rect x="210" y="354" width="1" height="1" fill="#00ff00" />
<rect x="211" y="353" width="1" height="2" fill="#00ff00" />
<rect x="212" y="354" width="1" height="1" fill="#00ff00" />
<rect x="213" y="353" width="1" height="2" fill="#00ff00" />
<rect x="214" y="354" width="1" height="1" fill="#00ff00" />
<rect x="216" y="353" width="1" height="2" fill="#00ff00" />
<rect x="217" y="353" width="1" height="2" fill="#00ff00" />
<rect x="218" y="353" width="1" height="2" fill="#00ff00" />
<rect x="219" y="353" width="1" height="2" fill="#00ff00" />
<rect x="222" y="353" width="1" height="2" fill="#00ff00" />
<rect x="224" y="354" width="1" height="1" fill="#00ff00" />
<rect x="225" y="354" width="1" height="1" fill="#00ff00" />
<rect x="226" y="354" width="1" height="1" fill="#00ff00" />
<rect x="227" y="354" width="1" height="1" fill="#00ff00" />
<rect x="228" y="353" width="1" height="2" fill="#00ff00" />
<rect x="229" y="354" width="1" height="1" fill="#00ff00" />
<rect x="230" y="353" width="1" height="2" fill="#00ff00" />
<rect x="231" y="353" width="1" height="2" fill="#00ff00" />
<rect x="232" y="354" width="1" height="1" fill="#00ff00" />
<rect x="233" y="354" width="1" height="1" fill="#00ff00" />
<rect x="234" y="354" width="1" height="1" fill="#00ff00" />
<rect x="235" y="354" width="1" height="1" fill="#00ff00" />
<rect x="237" y="354" width="1" height="1" fill="#00ff00" />
<rect x="238" y="353" width="1" height="2" fill="#00ff00" />
<rect x="239" y="354" width="1" height="1" fill="#00ff00" />
<rect x="240" y="354" width="1" height="1" fill="#00ff00" />
<rect x="241" y="353" width="1" height="2" fill="#00ff00" />
<rect x="242" y="354" width="1" height="1" fill="#00ff00" />
<rect x="243" y="354" width="1" height="1" fill="#00ff00" />
<rect x="244" y="354" width="1" height="1" fill="#00ff00" />
<rect x="246" y="354" width="1" height="1" fill="#00ff00" />
<rect x="247" y="353" width="1" height="2" fill="#00ff00" />
<rect x="248" y="354" width="1" height="1" fill="#00ff00" />
<rect x="249" y="354" width="1" height="1" fill="#00ff00" />
<rect x="250" y="354" width="1" height="1" fill="#00ff00" />
<rect x="251" y="354" width="1" height="1" fill="#00ff00" />
<rect x="252" y="353" width="1" height="2" fill="#00ff00" />
<rect x="253" y="354" width="1" height="1" fill="#00ff00" />
<rect x="254" y="354" width="1" height="1" fill="#00ff00" />
<rect x="255" y="353" width="1" height="2" fill="#00ff00" />
<rect x="256" y="353" width="1" height="2" fill="#00ff00" />
<rect x="257" y="353" width="1" height="2" fill="#00ff00" />
<rect x="258" y="353" width="1" height="2" fill="#00ff00" />
<rect x="259" y="354" width="1" height="1" fill="#00ff00" />
<rect x="260" y="354" width="1" height="1" fill="#00ff00" />
<rect x="261" y="354" width="1" height="1" fill="#00ff00" />
<rect x="262" y="354" width="1" height="1" fill="#00ff00" />
<rect x="263" y="353" width="1" height="2" fill="#00ff00" />
<rect x="264" y="353" width="1" height="2" fill="#00ff00" />
<rect x="265" y="354" width="1" height="1" fill="#00ff00" />
<rect x="266" y="353" width="1" height="2" fill="#00ff00" />
<rect x="267" y="353" width="1" height="2" fill="#00ff00" />
<rect x="268" y="354" width="1" height="1" fill="#00ff00" />
<rect x="269" y="353" width="1" height="2" fill="#00ff00" />
<rect x="270" y="354" width="1" height="1" fill="#00ff00" />
<rect x="271" y="353" width="1" height="2" fill="#00ff00" />
<rect x="273" y="354" width="1" height="1" fill="#00ff00" />
<rect x="275" y="354" width="1" height="1" fill="#00ff00" />
<rect x="276" y="354" width="1" height="1" fill="#00ff00" />
<rect x="277" y="353" width="1" height="2" fill="#00ff00" />
<rect x="278" y="354" width="1" height="1" fill="#00ff00" />
<rect x="279" y="354" width="1" height="1" fill="#00ff00" />
<rect x="280" y="354" width="1" height="1" fill="#00ff00" />
<rect x="282" y="354" width="1" height="1" fill="#00ff00" />
<rect x="283" y="354" width="1" height="1" fill="#00ff00" />
<rect x="284" y="353" width="1" height="2" fill="#00ff00" />
<rect x="286" y="353" width="1" height="2" fill="#00ff00" />
<rect x="287" y="354" width="1" height="1" fill="#00ff00" />
<rect x="288" y="354" width="1" height="1" fill="#00ff00" />
<rect x="289" y="354" width="1" height="1" fill="#00ff00" />
<rect x="290" y="354" width="1" height="1" fill="#00ff00" />
<rect x="291" y="354" width="1" height="1" fill="#00ff00" />
<rect x="292" y="353" width="1" height="2" fill="#00ff00" />
<rect x="294" y="354" width="1" height="1" fill="#00ff00" />
<rect x="295" y="354" width="1" height="1" fill="#00ff00" />
<rect x="296" y="354" width="1" height="1" fill="#00ff00" />
<rect x="297" y="354" width="1" height="1" fill="#00ff00" />
<rect x="298" y="353" width="1" height="2" fill="#00ff00" />
<rect x="299" y="353" width="1" height="2" fill="#00ff00" />
<rect x="300" y="353" width="1" height="2" fill="#00ff00" />
<rect x="302" y="353" width="1" height="2" fill="#00ff00" />
<rect x="303" y="353" width="1" height="2" fill="#00ff00" />
<rect x="304" y="354" width="1" height="1" fill="#00ff00" />
<rect x="306" y="354" width="1" height="1" fill="#00ff00" />
<rect x="309" y="354" width="1" height="1" fill="#00ff00" />
<rect x="310" y="354" width="1" height="1" fill="#00ff00" />
<rect x="311" y="354" width="1" height="1" fill="#00ff00" />
<rect x="312" y="353" width="1" height="2" fill="#00ff00" />
<rect x="313" y="354" width="1" height="1" fill="#00ff00" />
<rect x="314" y="354" width="1" height="1" fill="#00ff00" />
<rect x="315" y="353" width="1" height="2" fill="#00ff00" />
<rect x="316" y="354" width="1" height="1" fill="#00ff00" />
<rect x="317" y="354" width="1" height="1" fill="#00ff00" />
<rect x="318" y="354" width="1" height="1" fill="#00ff00" />
<rect x="319" y="353" width="1" height="2" fill="#00ff00" />
<rect x="320" y="353" width="1" height="2" fill="#00ff00" />
<rect x="322" y="353" width="1" height="2" fill="#00ff00" />
<rect x="325" y="353" width="1" height="2" fill="#00ff00" />
<rect x="326" y="353" width="1" height="2" fill="#00ff00" />
<rect x="327" y="353" width="1" height="2" fill="#00ff00" />
<rect x="328" y="353" width="1" height="2" fill="#00ff00" />
<rect x="329" y="354" width="1" height="1" fill="#00ff00" />
<rect x="330" y="354" width="1" height="1" fill="#00ff00" />
<rect x="331" y="354" width="1" height="1" fill="#00ff00" />
<rect x="332" y="354" width="1" height="1" fill="#00ff00" />
<rect x="333" y="353" width="1" height="2" fill="#00ff00" />
<rect x="335" y="354" width="1" height="1" fill="#00ff00" />
<rect x="336" y="354" width="1" height="1" fill="#00ff00" />
<rect x="337" y="353" width="1" height="2" fill="#00ff00" />
<rect x="338" y="354" width="1" height="1" fill="#00ff00" />
<rect x="339" y="354" width="1" height="1" fill="#00ff00" />
<rect x="340" y="354" width="1" height="1" fill="#00ff00" />
<rect x="341" y="353" width="1" height="2" fill="#00ff00" />
<rect x="342" y="354" width="1" height="1" fill="#00ff00" />
<rect x="343" y="354" width="1" height="1" fill="#00ff00" />
<rect x="344" y="354" width="1" height="1" fill="#00ff00" />
<rect x="346" y="354" width="1" height="1" fill="#00ff00" />
<rect x="348" y="353" width="1" height="2" fill="#00ff00" />
<rect x="349" y="354" width="1" height="1" fill="#00ff00" />
<rect x="350" y="354" width="1" height="1" fill="#00ff00" />
<rect x="351" y="354" width="1" height="1" fill="#00ff00" />
<rect x="352" y="354" width="1" height="1" fill="#00ff00" />
<rect x="353" y="353" width="1" height="2" fill="#00ff00" />
<rect x="354" y="353" width="1" height="2" fill="#00ff00" />
<rect x="356" y="354" width="1" height="1" fill="#00ff00" />
<rect x="357" y="353" width="1" height="2" fill="#00ff00" />
<rect x="358" y="354" width="1" height="1" fill="#00ff00" />
<rect x="359" y="353" width="1" height="2" fill="#00ff00" />
<rect x="360" y="354" width="1" height="1" fill="#00ff00" />
<rect x="361" y="353" width="1" height="2" fill="#00ff00" />
<rect x="362" y="353" width="1" height="2" fill="#00ff00" />
<rect x="363" y="354" width="1" height="1" fill="#00ff00" />
<rect x="365" y="354" width="1" height="1" fill="#00ff00" />
<rect x="366" y="353" width="1" height="2" fill="#00ff00" />
<rect x="367" y="354" width="1" height="1" fill="#00ff00" />
<rect x="368" y="354" width="1" height="1" fill="#00ff00" />
<rect x="369" y="354" width="1" height="1" fill="#00ff00" />
<rect x="370" y="354" width="1" height="1" fill="#00ff00" />
<rect x="371" y="354" width="1" height="1" fill="#00ff00" />
<rect x="373" y="353" width="1" height="2" fill="#00ff00" />
<rect x="374" y="354" width="1" height="1" fill="#00ff00" />
<rect x="375" y="353" width="1" height="2" fill="#00ff00" />
<rect x="376" y="354" width="1" height="1" fill="#00ff00" />
<rect x="377" y="353" width="1" height="2" fill="#00ff00" />
<rect x="379" y="354" width="1" height="1" fill="#00ff00" />
<rect x="380" y="353" width="1" height="2" fill="#00ff00" />
<rect x="381" y="353" width="1" height="2" fill="#00ff00" />
<rect x="383" y="353" width="1" height="2" fill="#00ff00" />
<rect x="384" y="354" width="1" height="1" fill="#00ff00" />
<rect x="385" y="354" width="1" height="1" fill="#00ff00" />
<rect x="386" y="354" width="1" height="1" fill="#00ff00" />
<rect x="387" y="354" width="1" height="1" fill="#00ff00" />
<rect x="388" y="353" width="1" height="2" fill="#00ff00" />
<rect x="389" y="354" width="1" height="1" fill="#00ff00" />
<rect x="392" y="354" width="1" height="1" fill="#00ff00" />
<rect x="394" y="353" width="1" height="2" fill="#00ff00" />
<rect x="396" y="353" width="1" height="2" fill="#00ff00" />
<rect x="397" y="354" width="1" height="1" fill="#00ff00" />
<rect x="398" y="354" width="1" height="1" fill="#00ff00" />
<rect x="399" y="353" width="1" height="2" fill="#00ff00" />
<rect x="400" y="354" width="1" height="1" fill="#00ff00" />
<rect x="402" y="354" width="1" height="1" fill="#00ff00" />
<rect x="403" y="354" width="1" height="1" fill="#00ff00" />
<rect x="404" y="354" width="1" height="1" fill="#00ff00" />
<rect x="405" y="353" width="1" height="2" fill="#00ff00" />
<rect x="406" y="354" width="1" height="1" fill="#00ff00" />
<rect x="408" y="354" width="1" height="1" fill="#00ff00" />
<rect x="410" y="354" width="1" height="1" fill="#00ff00" />
<rect x="411" y="354" width="1" height="1" fill="#00ff00" />
<rect x="412" y="353" width="1" height="2" fill="#00ff00" />
<rect x="413" y="354" width="1" height="1" fill="#00ff00" />
<rect x="414" y="354" width="1" height="1" fill="#00ff00" />
<rect x="416" y="353" width="1" height="2" fill="#00ff00" />
<rect x="418" y="353" width="1" height="2" fill="#00ff00" />
<rect x="419" y="354" width="1" height="1" fill="#00ff00" />
<rect x="420" y="353" width="1" height="2" fill="#00ff00" />
<rect x="421" y="354" width="1" height="1" fill="#00ff00" />
<rect x="422" y="354" width="1" height="1" fill="#00ff00" />
<rect x="423" y="353" width="1" height="2" fill="#00ff00" />
<rect x="424" y="354" width="1" height="1" fill="#00ff00" />
<rect x="426" y="353" width="1" height="2" fill="#00ff00" />
<rect x="427" y="354" width="1" height="1" fill="#00ff00" />
<rect x="429" y="354" width="1" height="1" fill="#00ff00" />
<rect x="430" y="354" width="1" height="1" fill="#00ff00" />
<rect x="431" y="354" width="1" height="1" fill="#00ff00" />
<rect x="432" y="354" width="1" height="1" fill="#00ff00" />
<rect x="433" y="354" width="1" height="1" fill="#00ff00" />
<rect x="434" y="353" width="1" height="2" fill="#00ff00" />
<rect x="435" y="353" width="1" height="2" fill="#00ff00" />
<rect x="436" y="353" width="1" height="2" fill="#00ff00" />
<rect x="437" y="354" width="1" height="1" fill="#00ff00" />
<rect x="441" y="353" width="1" height="2" fill="#00ff00" />
<rect x="442" y="354" width="1" height="1" fill="#00ff00" />
<rect x="443" y="354" width="1" height="1" fill="#00ff00" />
<rect x="444" y="354" width="1" height="1" fill="#00ff00" />
<rect x="445" y="354" width="1" height="1" fill="#00ff00" />
<rect x="446" y="354" width="1" height="1" fill="#00ff00" />
<rect x="447" y="353" width="1" height="2" fill="#00ff00" />
<rect x="448" y="353" width="1" height="2" fill="#00ff00" />
<rect x="449" y="354" width="1" height="1" fill="#00ff00" />
<rect x="450" y="353" width="1" height="2" fill="#00ff00" />
<rect x="451" y="353" width="1" height="2" fill="#00ff00" />
<rect x="452" y="354" width="1" height="1" fill="#00ff00" />
<rect x="453" y="354" width="1" height="1" fill="#00ff00" />
<rect x="454" y="354" width="1" height="1" fill="#00ff00" />
<rect x="455" y="353" width="1" height="2" fill="#00ff00" />
<rect x="62" y="351" width="1" height="4" fill="#ffff00" />
<rect x="63" y="353" width="1" height="2" fill="#ffff00" />
<rect x="64" y="352" width="1" height="3" fill="#ffff00" />
<rect x="65" y="351" width="1" height="4" fill="#ffff00" />
<rect x="66" y="351" width="1" height="4" fill="#ffff00" />
<rect x="67" y="351" width="1" height="4" fill="#ffff00" />
<rect x="68" y="352" width="1" height="3" fill="#ffff00" />
<rect x="69" y="351" width="1" height="4" fill="#ffff00" />
<rect x="74" y="352" width="1" height="3" fill="#ffff00" />
<rect x="75" y="352" width="1" height="3" fill="#ffff00" />
<rect x="76" y="351" width="1" height="4" fill="#ffff00" />
<rect x="77" y="352" width="1" height="3" fill="#ffff00" />
<rect x="78" y="351" width="1" height="4" fill="#ffff00" />
<rect x="79" y="351" width="1" height="4" fill="#ffff00" />
<rect x="80" y="351" width="1" height="4" fill="#ffff00" />
<rect x="81" y="351" width="1" height="4" fill="#ffff00" />
<rect x="82" y="353" width="1" height="2" fill="#ffff00" />
<rect x="83" y="353" width="1" height="2" fill="#ffff00" />
<rect x="84" y="351" width="1" height="4" fill="#ffff00" />
<rect x="438" y="352" width="15" height="3" fill="#ffff00" />
<rect x="450" y="351" width="1" height="4" fill="#ffff00" />
<rect x="451" y="352" width="1" height="3" fill="#ffff00" />
<rect x="452" y="352" width="1" height="3" fill="#ffff00" />
<rect x="453" y="353" width="1" height="2" fill="#ffff00" />
<rect x="454" y="352" width="1" height="3" fill="#ffff00" />
<rect x="455" y="350" width="1" height="5" fill="#ff0000" />
<rect x="456" y="350" width="1" height="5" fill="#ff0000" />
<rect x="457" y="350" width="1" height="5" fill="#ff0000" />
<rect x="458" y="349" width="1" height="6" fill="#ff0000" />
<rect x="459" y="348" width="1" height="7" fill="#ff0000" />
<rect x="460" y="349" width="1" height="6" fill="#ff0000" />
<rect x="461" y="348" width="1" height="7" fill="#ff0000" />
<rect x="461" y="348" width="1" height="2" fill="#ff00ff" />
<rect x="462" y="347" width="1" height="8" fill="#ff0000" />
<rect x="462" y="347" width="1" height="2" fill="#ff00ff" />
<rect x="463" y="346" width="1" height="9" fill="#ff0000" />
<rect x="463" y="346" width="1" height="2" fill="#ff00ff" />
<rect x="464" y="344" width="1" height="11" fill="#ff00ff" />
<rect x="465" y="345" width="1" height="10" fill="#ff00ff" />
<rect x="466" y="344" width="1" height="11" fill="#ff00ff" />
<rect x="467" y="344" width="1" height="11" fill="#ff00ff" />
<rect x="468" y="343" width="1" height="12" fill="#ff00ff" />
<rect x="469" y="344" width="1" height="11" fill="#ff00ff" />
<rect x="470" y="342" width="1" height="13" fill="#ff00ff" />
<rect x="471" y="343" width="1" height="12" fill="#ff00ff" />
<rect x="472" y="342" width="1" height="13" fill="#ff0000" />
<rect x="472" y="342" width="1" height="3" fill="#ff00ff" />
<rect x="473" y="342" width="1" height="13" fill="#ff0000" />
<rect x="473" y="342" width="1" height="1" fill="#ff00ff" />
<rect x="474" y="340" width="1" height="15" fill="#ff0000" />
<rect x="474" y="340" width="1" height="1" fill="#ff00ff" />
<rect x="475" y="338" width="1" height="17" fill="#ff0000" />
<rect x="475" y="338" width="1" height="3" fill="#ff00ff" />
<rect x="476" y="337" width="1" height="18" fill="#ff0000" />
<rect x="476" y="337" width="1" height="1" fill="#ff00ff" />
<rect x="477" y="335" width="1" height="20" fill="#ff00ff" />
<rect x="478" y="334" width="1" height="21" fill="#ff0000" />
<rect x="478" y="334" width="1" height="2" fill="#ff00ff" />
<rect x="479" y="333" width="1" height="22" fill="#ff0000" />
<rect x="479" y="333" width="1" height="3" fill="#ff00ff" />
<rect x="480" y="331" width="1" height="24" fill="#ff00ff" />
<rect x="481" y="330" width="1" height="25" fill="#ff00ff" />
<rect x="482" y="329" width="1" height="26" fill="#ff00ff" />
<rect x="483" y="331" width="1" height="24" fill="#ff00ff" />
<rect x="484" y="328" width="1" height="27" fill="#ff0000" />
<rect x="484" y="328" width="1" height="2" fill="#ff00ff" />
<rect x="485" y="328" width="1" height="27" fill="#ff00ff" />
<rect x="486" y="324" width="1" height="31" fill="#ff0000" />
<rect x="486" y="324" width="1" height="1" fill="#ff00ff" />
<rect x="487" y="325" width="1" height="30" fill="#ff0000" />
<rect x="487" y="325" width="1" height="3" fill="#ff00ff" />
<rect x="488" y="323" width="1" height="32" fill="#ff0000" />
<rect x="488" y="323" width="1" height="2" fill="#ff00ff" />
<rect x="489" y="319" width="1" height="36" fill="#ff00ff" />
<rect x="490" y="318" width="1" height="37" fill="#ff0000" />
<rect x="490" y="318" width="1" height="2" fill="#ff00ff" />
<rect x="491" y="316" width="1" height="39" fill="#ff0000" />
<rect x="491" y="316" width="1" height="2" fill="#ff00ff" />
<rect x="492" y="314" width="1" height="41" fill="#ff0000" />
<rect x="492" y="314" width="1" height="1" fill="#ff00ff" />
<rect x="493" y="313" width="1" height="42" fill="#ff00ff" />
<rect x="494" y="311" width="1" height="44" fill="#ff0000" />
<rect x="494" y="311" width="1" height="1" fill="#ff00ff" />
<rect x="495" y="309" width="1" height="46" fill="#ff0000" />
<rect x="495" y="309" width="1" height="1" fill="#ff00ff" />
<rect x="496" y="308" width="1" height="47" fill="#ff00ff" />
<rect x="497" y="305" width="1" height="50" fill="#ff0000" />
<rect x="497" y="305" width="1" height="3" fill="#ff00ff" />
<rect x="498" y="306" width="1" height="49" fill="#ff0000" />
<rect x="498" y="306" width="1" height="2" fill="#ff00ff" />
<rect x="499" y="303" width="1" height="52" fill="#ff0000" />
<rect x="499" y="303" width="1" height="1" fill="#ff00ff" />
<rect x="500" y="301" width="1" height="54" fill="#ff0000" />
<rect x="500" y="301" width="1" height="1" fill="#ff00ff" />
<rect x="501" y="299" width="1" height="56" fill="#ff00ff" />
<rect x="502" y="296" width="1" height="59" fill="#ff0000" />
<rect x="502" y="296" width="1" height="1" fill="#ff00ff" />
<rect x="503" y="296" width="1" height="59" fill="#ff0000" />
<rect x="503" y="296" width="1" height="3" fill="#ff00ff" />
<rect x="504" y="293" width="1" height="62" fill="#ff0000" />
<rect x="504" y="293" width="1" height="1" fill="#ff00ff" />
<rect x="505" y="292" width="1" height="63" fill="#ff0000" />
<rect x="505" y="292" width="1" height="2" fill="#ff00ff" />
<rect x="506" y="289" width="1" height="66" fill="#ff00ff" />
<rect x="507" y="287" width="1" height="68" fill="#ff0000" />
<rect x="507" y="287" width="1" height="1" fill="#ff00ff" />
<rect x="508" y="285" width="1" height="70" fill="#ff0000" />
<rect x="508" y="285" width="1" height="2" fill="#ff00ff" />
<rect x="509" y="282" width="1" height="73" fill="#ff00ff" />
<rect x="510" y="281" width="1" height="74" fill="#ff0000" />
<rect x="510" y="281" width="1" height="2" fill="#ff00ff" />
<rect x="511" y="279" width="1" height="76" fill="#ff0000" />
<rect x="511" y="279" width="1" height="1" fill="#ff00ff" />
<rect x="512" y="277" width="1" height="78" fill="#ff0000" />
<rect x="512" y="277" width="1" height="2" fill="#ff00ff" />
<rect x="513" y="276" width="1" height="79" fill="#ff0000" />
<rect x="513" y="276" width="1" height="3" fill="#ff00ff" />
<rect x="514" y="273" width="1" height="82" fill="#ff00ff" />
<rect x="515" y="273" width="1" height="82" fill="#ff0000" />
<rect x="515" y="273" width="1" height="3" fill="#ff00ff" />
<rect x="516" y="271" width="1" height="84" fill="#ff0000" />
<rect x="516" y="271" width="1" height="3" fill="#ff00ff" />
<rect x="478" y="333" width="1" height="22" fill="#ff0000" />
<rect x="479" y="333" width="1" height="22" fill="#ff0000" />
<rect x="498" y="287" width="1" height="68" fill="#ffff00" />
<rect x="503" y="280" width="1" height="75" fill="#ffff00" />
<rect x="507" y="284" width="1" height="71" fill="#ffff00" />
<rect x="510" y="282" width="1" height="73" fill="#ffff00" />
<rect x="513" y="290" width="1" height="65" fill="#ffff00" />
<rect x="515" y="285" width="1" height="70" fill="#ffff00" />
<rect x="62" y="326" width="1" height="1" fill="#ffff00" />
<rect x="63" y="323" width="1" height="4" fill="#ffff00" />
<rect x="64" y="320" width="1" height="4" fill="#ffff00" />
<rect x="65" y="320" width="1" height="3" fill="#ffff00" />
<rect x="66" y="322" width="1" height="2" fill="#ffff00" />
<rect x="67" y="322" width="1" height="2" fill="#ffff00" />
<rect x="68" y="322" width="1" height="3" fill="#ffff00" />
<rect x="69" y="321" width="1" height="4" fill="#ffff00" />
<rect x="70" y="321" width="1" height="3" fill="#ffff00" />
<rect x="71" y="321" width="1" height="3" fill="#ffff00" />
<rect x="72" y="321" width="1" height="2" fill="#ffff00" />
<rect x="73" y="322" width="1" height="3" fill="#ffff00" />
<rect x="74" y="323" width="1" height="2" fill="#ffff00" />
<rect x="75" y="323" width="1" height="1" fill="#ffff00" />
<rect x="76" y="322" width="1" height="2" fill="#ffff00" />
<rect x="77" y="322" width="1" height="2" fill="#ffff00" />
<rect x="78" y="323" width="1" height="1" fill="#ffff00" />
<rect x="79" y="322" width="1" height="2" fill="#ffff00" />
<rect x="80" y="322" width="1" height="2" fill="#ffff00" />
<rect x="81" y="322" width="1" height="2" fill="#ffff00" />
<rect x="82" y="322" width="1" height="2" fill="#ffff00" />
<rect x="83" y="323" width="1" height="1" fill="#ffff00" />
<rect x="84" y="323" width="1" height="1" fill="#ffff00" />
<rect x="85" y="323" width="1" height="2" fill="#ffff00" />
<rect x="86" y="324" width="1" height="2" fill="#ffff00" />
<rect x="87" y="323" width="1" height="3" fill="#ffff00" />
<rect x="88" y="323" width="1" height="4" fill="#ffff00" />
<rect x="89" y="324" width="1" height="3" fill="#ffff00" />
<rect x="90" y="324" width="1" height="1" fill="#ffff00" />
<rect x="91" y="324" width="1" height="1" fill="#ffff00" />
<rect x="92" y="323" width="1" height="2" fill="#ffff00" />
<rect x="93" y="323" width="1" height="2" fill="#ffff00" />
<rect x="94" y="324" width="1" height="1" fill="#ffff00" />
<rect x="95" y="324" width="1" height="2" fill="#ffff00" />
<rect x="96" y="324" width="1" height="2" fill="#ffff00" />
<rect x="97" y="324" width="1" height="1" fill="#ffff00" />
<rect x="98" y="324" width="1" height="1" fill="#ffff00" />
<rect x="99" y="323" width="1" height="2" fill="#ffff00" />
<rect x="100" y="323" width="1" height="2" fill="#ffff00" />
<rect x="101" y="323" width="1" height="2" fill="#ffff00" />
<rect x="102" y="323" width="1" height="1" fill="#ffff00" />
<rect x="103" y="323" width="1" height="2" fill="#ffff00" />
<rect x="104" y="323" width="1" height="2" fill="#ffff00" />
<rect x="105" y="323" width="1" height="2" fill="#ffff00" />
<rect x="106" y="324" width="1" height="1" fill="#ffff00" />
<rect x="107" y="323" width="1" height="2" fill="#ffff00" />
<rect x="108" y="323" width="1" height="2" fill="#ffff00" />
<rect x="109" y="323" width="1" height="2" fill="#ffff00" />
<rect x="110" y="323" width="1" height="2" fill="#ffff00" />
<rect x="111" y="324" width="1" height="1" fill="#ffff00" />
<rect x="112" y="324" width="1" height="2" fill="#ffff00" />
<rect x="113" y="324" width="1" height="2" fill="#ffff00" />
<rect x="114" y="324" width="1" height="2" fill="#ffff00" />
<rect x="115" y="323" width="1" height="3" fill="#ffff00" />
<rect x="116" y="323" width="1" height="3" fill="#ffff00" />
<rect x="117" y="324" width="1" height="2" fill="#ffff00" />
<rect x="118" y="324" width="1" height="2" fill="#ffff00" />
<rect x="119" y="325" width="1" height="1" fill="#ffff00" />
<rect x="120" y="325" width="1" height="1" fill="#ffff00" />
<rect x="121" y="325" width="1" height="1" fill="#ffff00" />
<rect x="122" y="324" width="1" height="2" fill="#ffff00" />
<rect x="123" y="324" width="1" height="2" fill="#ffff00" />
<rect x="124" y="325" width="1" height="1" fill="#ffff00" />
<rect x="125" y="325" width="1" height="1" fill="#ffff00" />
<rect x="126" y="325" width="1" height="1" fill="#ffff00" />
<rect x="127" y="324" width="1" height="2" fill="#ffff00" />
<rect x="128" y="324" width="1" height="2" fill="#ffff00" />
<rect x="129" y="325" width="1" height="1" fill="#ffff00" />
<rect x="130" y="324" width="1" height="2" fill="#ffff00" />
<rect x="131" y="323" width="1" height="2" fill="#ffff00" />
<rect x="132" y="323" width="1" height="3" fill="#ffff00" />
<rect x="133" y="324" width="1" height="2" fill="#ffff00" />
<rect x="134" y="324" width="1" height="2" fill="#ffff00" />
<rect x="135" y="325" width="1" height="2" fill="#ffff00" />
<rect x="136" y="325" width="1" height="2" fill="#ffff00" />
<rect x="137" y="324" width="1" height="2" fill="#ffff00" />
<rect x="138" y="324" width="1" height="2" fill="#ffff00" />
<rect x="139" y="325" width="1" height="1" fill="#ffff00" />
<rect x="140" y="325" width="1" height="2" fill="#ffff00" />
<rect x="141" y="326" width="1" height="1" fill="#ffff00" />
<rect x="142" y="325" width="1" height="2" fill="#ffff00" />
<rect x="143" y="325" width="1" height="2" fill="#ffff00" />
<rect x="144" y="324" width="1" height="3" fill="#ffff00" />
<rect x="145" y="324" width="1" height="1" fill="#ffff00" />
<rect x="146" y="324" width="1" height="1" fill="#ffff00" />
<rect x="147" y="324" width="1" height="2" fill="#ffff00" />
<rect x="148" y="325" width="1" height="1" fill="#ffff00" />
<rect x="149" y="325" width="1" height="1" fill="#ffff00" />
<rect x="150" y="324" width="1" height="2" fill="#ffff00" />
<rect x="151" y="324" width="1" height="2" fill="#ffff00" />
<rect x="152" y="324" width="1" height="2" fill="#ffff00" />
<rect x="153" y="324" width="1" height="2" fill="#ffff00" />
<rect x="154" y="325" width="1" height="1" fill="#ffff00" />
<rect x="155" y="323" width="1" height="3" fill="#ffff00" />
<rect x="156" y="323" width="1" height="3" fill="#ffff00" />
<rect x="157" y="325" width="1" height="1" fill="#ffff00" />
<rect x="158" y="325" width="1" height="1" fill="#ffff00" />
<rect x="159" y="325" width="1" height="1" fill="#ffff00" />
<rect x="160" y="324" width="1" height="2" fill="#ffff00" />
<rect x="161" y="324" width="1" height="2" fill="#ffff00" />
<rect x="162" y="325" width="1" height="1" fill="#ffff00" />
<rect x="163" y="323" width="1" height="3" fill="#ffff00" />
<rect x="164" y="323" width="1" height="3" fill="#ffff00" />
<rect x="165" y="325" width="1" height="2" fill="#ffff00" />
<rect x="166" y="324" width="1" height="3" fill="#ffff00" />
<rect x="167" y="324" width="1" height="1" fill="#ffff00" />
<rect x="168" y="322" width="1" height="3" fill="#ffff00" />
<rect x="169" y="322" width="1" height="3" fill="#ffff00" />
<rect x="170" y="324" width="1" height="1" fill="#ffff00" />
<rect x="171" y="324" width="1" height="1" fill="#ffff00" />
<rect x="172" y="324" width="1" height="1" fill="#ffff00" />
<rect x="173" y="324" width="1" height="1" fill="#ffff00" />
<rect x="174" y="324" width="1" height="1" fill="#ffff00" />
<rect x="175" y="324" width="1" height="3" fill="#ffff00" />
<rect x="176" y="324" width="1" height="3" fill="#ffff00" />
<rect x="177" y="324" width="1" height="1" fill="#ffff00" />
<rect x="178" y="324" width="1" height="1" fill="#ffff00" />
<rect x="179" y="324" width="1" height="1" fill="#ffff00" />
<rect x="180" y="324" width="1" height="3" fill="#ffff00" />
<rect x="181" y="324" width="1" height="3" fill="#ffff00" />
<rect x="182" y="324" width="1" height="1" fill="#ffff00" />
<rect x="183" y="324" width="1" height="1" fill="#ffff00" />
<rect x="184" y="324" width="1" height="1" fill="#ffff00" />
<rect x="185" y="324" width="1" height="1" fill="#ffff00" />
<rect x="186" y="324" width="1" height="1" fill="#ffff00" />
<rect x="187" y="324" width="1" height="1" fill="#ffff00" />
<rect x="188" y="324" width="1" height="1" fill="#ffff00" />
<rect x="189" y="324" width="1" height="3" fill="#ffff00" />
<rect x="190" y="324" width="1" height="3" fill="#ffff00" />
<rect x="191" y="324" width="1" height="1" fill="#ffff00" />
<rect x="192" y="324" width="1" height="1" fill="#ffff00" />
<rect x="193" y="322" width="1" height="3" fill="#ffff00" />
<rect x="194" y="322" width="1" height="3" fill="#ffff00" />
<rect x="195" y="322" width="1" height="3" fill="#ffff00" />
<rect x="196" y="322" width="1" height="4" fill="#ffff00" />
<rect x="197" y="324" width="1" height="2" fill="#ffff00" />
<rect x="198" y="324" width="1" height="1" fill="#ffff00" />
<rect x="199" y="324" width="1" height="2" fill="#ffff00" />
<rect x="200" y="324" width="1" height="2" fill="#ffff00" />
<rect x="201" y="324" width="1" height="1" fill="#ffff00" />
<rect x="202" y="323" width="1" height="2" fill="#ffff00" />
<rect x="203" y="323" width="1" height="2" fill="#ffff00" />
<rect x="204" y="324" width="1" height="2" fill="#ffff00" />
<rect x="205" y="316" width="1" height="10" fill="#ffff00" />
<rect x="206" y="316" width="1" height="4" fill="#ffff00" />
<rect x="207" y="319" width="1" height="6" fill="#ffff00" />
<rect x="208" y="323" width="1" height="2" fill="#ffff00" />
<rect x="209" y="323" width="1" height="1" fill="#ffff00" />
<rect x="210" y="323" width="1" height="3" fill="#ffff00" />
<rect x="211" y="324" width="1" height="2" fill="#ffff00" />
<rect x="212" y="322" width="1" height="3" fill="#ffff00" />
<rect x="213" y="322" width="1" height="2" fill="#ffff00" />
<rect x="214" y="323" width="1" height="1" fill="#ffff00" />
<rect x="215" y="321" width="1" height="3" fill="#ffff00" />
<rect x="216" y="321" width="1" height="3" fill="#ffff00" />
<rect x="217" y="323" width="1" height="1" fill="#ffff00" />
<rect x="218" y="323" width="1" height="1" fill="#ffff00" />
<rect x="219" y="323" width="1" height="1" fill="#ffff00" />
<rect x="220" y="323" width="1" height="2" fill="#ffff00" />
<rect x="221" y="323" width="1" height="2" fill="#ffff00" />
<rect x="222" y="322" width="1" height="2" fill="#ffff00" />
<rect x="223" y="322" width="1" height="2" fill="#ffff00" />
<rect x="224" y="323" width="1" height="3" fill="#ffff00" />
<rect x="225" y="324" width="1" height="2" fill="#ffff00" />
<rect x="226" y="322" width="1" height="3" fill="#ffff00" />
<rect x="227" y="322" width="1" height="2" fill="#ffff00" />
<rect x="228" y="322" width="1" height="2" fill="#ffff00" />
<rect x="229" y="322" width="1" height="2" fill="#ffff00" />
<rect x="230" y="323" width="1" height="1" fill="#ffff00" />
<rect x="231" y="322" width="1" height="2" fill="#ffff00" />
<rect x="232" y="322" width="1" height="1" fill="#ffff00" />
<rect x="233" y="322" width="1" height="2" fill="#ffff00" />
<rect x="234" y="323" width="1" height="1" fill="#ffff00" />
<rect x="235" y="323" width="1" height="1" fill="#ffff00" />
<rect x="236" y="323" width="1" height="1" fill="#ffff00" />
<rect x="237" y="322" width="1" height="2" fill="#ffff00" />
<rect x="238" y="322" width="1" height="3" fill="#ffff00" />
<rect x="239" y="324" width="1" height="1" fill="#ffff00" />
<rect x="240" y="322" width="1" height="3" fill="#ffff00" />
<rect x="241" y="322" width="1" height="2" fill="#ffff00" />
<rect x="242" y="323" width="1" height="1" fill="#ffff00" />
<rect x="243" y="323" width="1" height="1" fill="#ffff00" />
<rect x="244" y="322" width="1" height="2" fill="#ffff00" />
<rect x="245" y="322" width="1" height="2" fill="#ffff00" />
<rect x="246" y="323" width="1" height="1" fill="#ffff00" />
<rect x="247" y="322" width="1" height="2" fill="#ffff00" />
<rect x="248" y="322" width="1" height="1" fill="#ffff00" />
<rect x="249" y="322" width="1" height="1" fill="#ffff00" />
<rect x="250" y="322" width="1" height="2" fill="#ffff00" />
<rect x="251" y="321" width="1" height="3" fill="#ffff00" />
<rect x="252" y="321" width="1" height="3" fill="#ffff00" />
<rect x="253" y="321" width="1" height="3" fill="#ffff00" />
<rect x="254" y="321" width="1" height="3" fill="#ffff00" />
<rect x="255" y="322" width="1" height="2" fill="#ffff00" />
<rect x="256" y="322" width="1" height="1" fill="#ffff00" />
<rect x="257" y="322" width="1" height="1" fill="#ffff00" />
<rect x="258" y="322" width="1" height="1" fill="#ffff00" />
<rect x="259" y="322" width="1" height="2" fill="#ffff00" />
<rect x="260" y="322" width="1" height="2" fill="#ffff00" />
<rect x="261" y="322" width="1" height="1" fill="#ffff00" />
<rect x="262" y="322" width="1" height="1" fill="#ffff00" />
<rect x="263" y="322" width="1" height="1" fill="#ffff00" />
<rect x="264" y="322" width="1" height="2" fill="#ffff00" />
<rect x="265" y="322" width="1" height="2" fill="#ffff00" />
<rect x="266" y="322" width="1" height="1" fill="#ffff00" />
<rect x="267" y="322" width="1" height="2" fill="#ffff00" />
<rect x="268" y="322" width="1" height="2" fill="#ffff00" />
<rect x="269" y="320" width="1" height="3" fill="#ffff00" />
<rect x="270" y="320" width="1" height="3" fill="#ffff00" />
<rect x="271" y="322" width="1" height="1" fill="#ffff00" />
<rect x="272" y="321" width="1" height="2" fill="#ffff00" />
<rect x="273" y="321" width="1" height="1" fill="#ffff00" />
<rect x="274" y="321" width="1" height="1" fill="#ffff00" />
<rect x="275" y="321" width="1" height="2" fill="#ffff00" />
<rect x="276" y="321" width="1" height="2" fill="#ffff00" />
<rect x="277" y="321" width="1" height="2" fill="#ffff00" />
<rect x="278" y="322" width="1" height="1" fill="#ffff00" />
<rect x="279" y="321" width="1" height="2" fill="#ffff00" />
<rect x="280" y="321" width="1" height="1" fill="#ffff00" />
<rect x="281" y="321" width="1" height="1" fill="#ffff00" />
<rect x="282" y="321" width="1" height="1" fill="#ffff00" />
<rect x="283" y="321" width="1" height="1" fill="#ffff00" />
<rect x="284" y="321" width="1" height="1" fill="#ffff00" />
<rect x="285" y="321" width="1" height="1" fill="#ffff00" />
<rect x="286" y="321" width="1" height="1" fill="#ffff00" />
<rect x="287" y="321" width="1" height="1" fill="#ffff00" />
<rect x="288" y="321" width="1" height="1" fill="#ffff00" />
<rect x="289" y="321" width="1" height="1" fill="#ffff00" />
<rect x="290" y="320" width="1" height="2" fill="#ffff00" />
<rect x="291" y="320" width="1" height="2" fill="#ffff00" />
<rect x="292" y="321" width="1" height="1" fill="#ffff00" />
<rect x="293" y="320" width="1" height="2" fill="#ffff00" />
<rect x="294" y="319" width="1" height="2" fill="#ffff00" />
<rect x="295" y="319" width="1" height="2" fill="#ffff00" />
<rect x="296" y="319" width="1" height="2" fill="#ffff00" />
<rect x="297" y="319" width="1" height="1" fill="#ffff00" />
<rect x="298" y="319" width="1" height="1" fill="#ffff00" />
<rect x="299" y="319" width="1" height="2" fill="#ffff00" />
<rect x="300" y="317" width="1" height="4" fill="#ffff00" />
<rect x="301" y="317" width="1" height="2" fill="#ffff00" />
<rect x="302" y="318" width="1" height="1" fill="#ffff00" />
<rect x="303" y="318" width="1" height="1" fill="#ffff00" />
<rect x="304" y="318" width="1" height="2" fill="#ffff00" />
<rect x="305" y="319" width="1" height="1" fill="#ffff00" />
<rect x="306" y="319" width="1" height="1" fill="#ffff00" />
<rect x="307" y="319" width="1" height="1" fill="#ffff00" />
<rect x="308" y="318" width="1" height="2" fill="#ffff00" />
<rect x="309" y="318" width="1" height="1" fill="#ffff00" />
<rect x="310" y="316" width="1" height="3" fill="#ffff00" />
<rect x="311" y="316" width="1" height="3" fill="#ffff00" />
<rect x="312" y="318" width="1" height="1" fill="#ffff00" />
<rect x="313" y="318" width="1" height="1" fill="#ffff00" />
<rect x="314" y="317" width="1" height="2" fill="#ffff00" />
<rect x="315" y="317" width="1" height="2" fill="#ffff00" />
<rect x="316" y="318" width="1" height="1" fill="#ffff00" />
<rect x="317" y="317" width="1" height="2" fill="#ffff00" />
<rect x="318" y="316" width="1" height="2" fill="#ffff00" />
<rect x="319" y="316" width="1" height="3" fill="#ffff00" />
<rect x="320" y="316" width="1" height="3" fill="#ffff00" />
<rect x="321" y="316" width="1" height="1" fill="#ffff00" />
<rect x="322" y="316" width="1" height="2" fill="#ffff00" />
<rect x="323" y="317" width="1" height="1" fill="#ffff00" />
<rect x="324" y="317" width="1" height="1" fill="#ffff00" />
<rect x="325" y="317" width="1" height="1" fill="#ffff00" />
<rect x="326" y="316" width="1" height="2" fill="#ffff00" />
<rect x="327" y="316" width="1" height="2" fill="#ffff00" />
<rect x="328" y="315" width="1" height="3" fill="#ffff00" />
<rect x="329" y="315" width="1" height="1" fill="#ffff00" />
<rect x="330" y="315" width="1" height="2" fill="#ffff00" />
<rect x="331" y="316" width="1" height="2" fill="#ffff00" />
<rect x="332" y="317" width="1" height="1" fill="#ffff00" />
<rect x="333" y="317" width="1" height="2" fill="#ffff00" />
<rect x="334" y="314" width="1" height="5" fill="#ffff00" />
<rect x="335" y="314" width="1" height="3" fill="#ffff00" />
<rect x="336" y="316" width="1" height="1" fill="#ffff00" />
<rect x="337" y="315" width="1" height="2" fill="#ffff00" />
<rect x="338" y="313" width="1" height="3" fill="#ffff00" />
<rect x="339" y="313" width="1" height="4" fill="#ffff00" />
<rect x="340" y="314" width="1" height="3" fill="#ffff00" />
<rect x="341" y="314" width="1" height="1" fill="#ffff00" />
<rect x="342" y="314" width="1" height="1" fill="#ffff00" />
<rect x="343" y="314" width="1" height="1" fill="#ffff00" />
<rect x="344" y="313" width="1" height="2" fill="#ffff00" />
<rect x="345" y="313" width="1" height="4" fill="#ffff00" />
<rect x="346" y="314" width="1" height="3" fill="#ffff00" />
<rect x="347" y="313" width="1" height="2" fill="#ffff00" />
<rect x="348" y="311" width="1" height="3" fill="#ffff00" />
<rect x="349" y="311" width="1" height="3" fill="#ffff00" />
<rect x="350" y="313" width="1" height="1" fill="#ffff00" />
<rect x="351" y="313" width="1" height="2" fill="#ffff00" />
<rect x="352" y="313" width="1" height="2" fill="#ffff00" />
<rect x="353" y="312" width="1" height="2" fill="#ffff00" />
<rect x="354" y="312" width="1" height="2" fill="#ffff00" />
<rect x="355" y="312" width="1" height="2" fill="#ffff00" />
<rect x="356" y="311" width="1" height="2" fill="#ffff00" />
<rect x="357" y="311" width="1" height="3" fill="#ffff00" />
<rect x="358" y="312" width="1" height="2" fill="#ffff00" />
<rect x="359" y="312" width="1" height="1" fill="#ffff00" />
<rect x="360" y="311" width="1" height="2" fill="#ffff00" />
<rect x="361" y="311" width="1" height="2" fill="#ffff00" />
<rect x="362" y="312" width="1" height="1" fill="#ffff00" />
<rect x="363" y="312" width="1" height="1" fill="#ffff00" />
<rect x="364" y="311" width="1" height="2" fill="#ffff00" />
<rect x="365" y="311" width="1" height="2" fill="#ffff00" />
<rect x="366" y="309" width="1" height="4" fill="#ffff00" />
<rect x="367" y="309" width="1" height="3" fill="#ffff00" />
<rect x="368" y="311" width="1" height="2" fill="#ffff00" />
<rect x="369" y="311" width="1" height="2" fill="#ffff00" />
<rect x="370" y="311" width="1" height="2" fill="#ffff00" />
<rect x="371" y="312" width="1" height="1" fill="#ffff00" />
<rect x="372" y="311" width="1" height="2" fill="#ffff00" />
<rect x="373" y="311" width="1" height="1" fill="#ffff00" />
<rect x="374" y="309" width="1" height="3" fill="#ffff00" />
<rect x="375" y="309" width="1" height="2" fill="#ffff00" />
<rect x="376" y="309" width="1" height="2" fill="#ffff00" />
<rect x="377" y="309" width="1" height="2" fill="#ffff00" />
<rect x="378" y="310" width="1" height="1" fill="#ffff00" />
<rect x="379" y="310" width="1" height="1" fill="#ffff00" />
<rect x="380" y="309" width="1" height="2" fill="#ffff00" />
<rect x="381" y="307" width="1" height="3" fill="#ffff00" />
<rect x="382" y="307" width="1" height="5" fill="#ffff00" />
<rect x="383" y="307" width="1" height="5" fill="#ffff00" />
<rect x="384" y="307" width="1" height="3" fill="#ffff00" />
<rect x="385" y="308" width="1" height="2" fill="#ffff00" />
<rect x="386" y="308" width="1" height="1" fill="#ffff00" />
<rect x="387" y="307" width="1" height="2" fill="#ffff00" />
<rect x="388" y="307" width="1" height="3" fill="#ffff00" />
<rect x="389" y="309" width="1" height="1" fill="#ffff00" />
<rect x="390" y="308" width="1" height="2" fill="#ffff00" />
<rect x="391" y="308" width="1" height="1" fill="#ffff00" />
<rect x="392" y="305" width="1" height="4" fill="#ffff00" />
<rect x="393" y="305" width="1" height="3" fill="#ffff00" />
<rect x="394" y="307" width="1" height="2" fill="#ffff00" />
<rect x="395" y="307" width="1" height="2" fill="#ffff00" />
<rect x="396" y="307" width="1" height="1" fill="#ffff00" />
<rect x="397" y="307" width="1" height="1" fill="#ffff00" />
<rect x="398" y="307" width="1" height="1" fill="#ffff00" />
<rect x="399" y="306" width="1" height="2" fill="#ffff00" />
<rect x="400" y="304" width="1" height="3" fill="#ffff00" />
<rect x="401" y="304" width="1" height="5" fill="#ffff00" />
<rect x="402" y="304" width="1" height="5" fill="#ffff00" />
<rect x="403" y="304" width="1" height="3" fill="#ffff00" />
<rect x="404" y="306" width="1" height="1" fill="#ffff00" />
<rect x="405" y="305" width="1" height="2" fill="#ffff00" />
<rect x="406" y="304" width="1" height="2" fill="#ffff00" />
<rect x="407" y="304" width="1" height="2" fill="#ffff00" />
<rect x="408" y="305" width="1" height="1" fill="#ffff00" />
<rect x="409" y="305" width="1" height="1" fill="#ffff00" />
<rect x="410" y="303" width="1" height="3" fill="#ffff00" />
<rect x="411" y="303" width="1" height="2" fill="#ffff00" />
<rect x="412" y="304" width="1" height="1" fill="#ffff00" />
<rect x="413" y="304" width="1" height="3" fill="#ffff00" />
<rect x="414" y="302" width="1" height="5" fill="#ffff00" />
<rect x="415" y="296" width="1" height="7" fill="#ffff00" />
<rect x="416" y="296" width="1" height="5" fill="#ffff00" />
<rect x="417" y="300" width="1" height="5" fill="#ffff00" />
<rect x="418" y="302" width="1" height="3" fill="#ffff00" />
<rect x="419" y="302" width="1" height="1" fill="#ffff00" />
<rect x="420" y="302" width="1" height="4" fill="#ffff00" />
<rect x="421" y="305" width="1" height="1" fill="#ffff00" />
<rect x="422" y="304" width="1" height="2" fill="#ffff00" />
<rect x="423" y="302" width="1" height="3" fill="#ffff00" />
<rect x="424" y="302" width="1" height="4" fill="#ffff00" />
<rect x="425" y="302" width="1" height="4" fill="#ffff00" />
<rect x="426" y="302" width="1" height="2" fill="#ffff00" />
<rect x="427" y="303" width="1" height="1" fill="#ffff00" />
<rect x="428" y="302" width="1" height="2" fill="#ffff00" />
<rect x="429" y="302" width="1" height="2" fill="#ffff00" />
<rect x="430" y="301" width="1" height="3" fill="#ffff00" />
<rect x="431" y="300" width="1" height="2" fill="#ffff00" />
<rect x="432" y="300" width="1" height="4" fill="#ffff00" />
<rect x="433" y="303" width="1" height="1" fill="#ffff00" />
<rect x="434" y="303" width="1" height="1" fill="#ffff00" />
<rect x="435" y="302" width="1" height="2" fill="#ffff00" />
<rect x="436" y="301" width="1" height="2" fill="#ffff00" />
<rect x="437" y="301" width="1" height="2" fill="#ffff00" />
<rect x="438" y="301" width="1" height="2" fill="#ffff00" />
<rect x="439" y="301" width="1" height="4" fill="#ffff00" />
<rect x="440" y="299" width="1" height="6" fill="#ffff00" />
<rect x="441" y="299" width="1" height="2" fill="#ffff00" />
<rect x="442" y="299" width="1" height="2" fill="#ffff00" />
<rect x="443" y="299" width="1" height="4" fill="#ffff00" />
<rect x="444" y="301" width="1" height="2" fill="#ffff00" />
<rect x="445" y="301" width="1" height="1" fill="#ffff00" />
<rect x="446" y="301" width="1" height="1" fill="#ffff00" />
<rect x="447" y="301" width="1" height="1" fill="#ffff00" />
<rect x="448" y="299" width="1" height="3" fill="#ffff00" />
<rect x="449" y="299" width="1" height="3" fill="#ffff00" />
<rect x="450" y="301" width="1" height="4" fill="#ffff00" />
<rect x="451" y="300" width="1" height="5" fill="#ffff00" />
<rect x="452" y="300" width="1" height="1" fill="#ffff00" />
<rect x="453" y="300" width="1" height="1" fill="#ffff00" />
<rect x="454" y="300" width="1" height="1" fill="#ffff00" />
<rect x="455" y="300" width="1" height="1" fill="#ffff00" />
<rect x="456" y="300" width="1" height="4" fill="#ffff00" />
<rect x="457" y="301" width="1" height="3" fill="#ffff00" />
<rect x="458" y="299" width="1" height="3" fill="#ffff00" />
<rect x="459" y="299" width="1" height="1" fill="#ffff00" />
<rect x="460" y="299" width="1" height="1" fill="#ffff00" />
<rect x="461" y="299" width="1" height="1" fill="#ffff00" />
<rect x="462" y="299" width="1" height="1" fill="#ffff00" />
<rect x="463" y="299" width="1" height="1" fill="#ffff00" />
<rect x="464" y="299" width="1" height="1" fill="#ffff00" />
<rect x="465" y="298" width="1" height="2" fill="#ffff00" />
<rect x="466" y="298" width="1" height="3" fill="#ffff00" />
<rect x="467" y="298" width="1" height="3" fill="#ffff00" />
<rect x="468" y="297" width="1" height="2" fill="#ffff00" />
<rect x="469" y="297" width="1" height="5" fill="#ffff00" />
<rect x="470" y="298" width="1" height="4" fill="#ffff00" />
<rect x="471" y="298" width="1" height="1" fill="#ffff00" />
<rect x="472" y="297" width="1" height="2" fill="#ffff00" />
<rect x="473" y="297" width="1" height="3" fill="#ffff00" />
<rect x="474" y="299" width="1" height="2" fill="#ffff00" />
<rect x="475" y="296" width="1" height="5" fill="#ffff00" />
<rect x="476" y="296" width="1" height="1" fill="#ffff00" />
<rect x="477" y="296" width="1" height="4" fill="#ffff00" />
<rect x="478" y="296" width="1" height="4" fill="#ffff00" />
<rect x="479" y="295" width="1" height="2" fill="#ffff00" />
<rect x="480" y="294" width="1" height="2" fill="#ffff00" />
<rect x="481" y="294" width="1" height="2" fill="#ffff00" />
<rect x="482" y="295" width="1" height="1" fill="#ffff00" />
<rect x="483" y="292" width="1" height="4" fill="#ffff00" />
<rect x="484" y="292" width="1" height="4" fill="#ffff00" />
<rect x="485" y="295" width="1" height="1" fill="#ffff00" />
<rect x="486" y="293" width="1" height="3" fill="#ffff00" />
<rect x="487" y="293" width="1" height="3" fill="#ffff00" />
<rect x="488" y="293" width="1" height="3" fill="#ffff00" />
<rect x="489" y="293" width="1" height="2" fill="#ffff00" />
<rect x="490" y="294" width="1" height="1" fill="#ffff00" />
<rect x="491" y="294" width="1" height="1" fill="#ffff00" />
<rect x="492" y="293" width="1" height="2" fill="#ffff00" />
<rect x="493" y="293" width="1" height="2" fill="#ffff00" />
<rect x="494" y="294" width="1" height="1" fill="#ffff00" />
<rect x="495" y="294" width="1" height="1" fill="#ffff00" />
<rect x="496" y="294" width="1" height="1" fill="#ffff00" />
<rect x="497" y="294" width="1" height="1" fill="#ffff00" />
<rect x="498" y="294" width="1" height="1" fill="#ffff00" />
<rect x="499" y="294" width="1" height="1" fill="#ffff00" />
<rect x="500" y="294" width="1" height="4" fill="#ffff00" />
<rect x="501" y="293" width="1" height="5" fill="#ffff00" />
<rect x="502" y="293" width="1" height="3" fill="#ffff00" />
<rect x="503" y="293" width="1" height="3" fill="#ffff00" />
<rect x="504" y="290" width="1" height="4" fill="#ffff00" />
<rect x="505" y="290" width="1" height="4" fill="#ffff00" />
<rect x="506" y="291" width="1" height="3" fill="#ffff00" />
<rect x="507" y="291" width="1" height="2" fill="#ffff00" />
<rect x="508" y="289" width="1" height="4" fill="#ffff00" />
<rect x="509" y="289" width="1" height="3" fill="#ffff00" />
<rect x="510" y="291" width="1" height="3" fill="#ffff00" />
<rect x="511" y="289" width="1" height="5" fill="#ffff00" />
<rect x="512" y="289" width="1" height="2" fill="#ffff00" />
<rect x="513" y="290" width="1" height="5" fill="#ffff00" />
<rect x="514" y="294" width="1" height="1" fill="#ffff00" />
<rect x="515" y="291" width="1" height="4" fill="#ffff00" />
<rect x="516" y="288" width="1" height="4" fill="#ffff00" />
<rect x="516" y="222" width="1" height="50" fill="#c8c8c8" />
<text x="31.3" y="77" font-size="12.4" fill="#000" text-anchor="start" textLength="24" lengthAdjust="spacingAndGlyphs" >5000</text>
<text x="31.3" y="104" font-size="12.4" fill="#000" text-anchor="start" textLength="24" lengthAdjust="spacingAndGlyphs" >4000</text>
<text x="31.3" y="130" font-size="12.4" fill="#000" text-anchor="start" textLength="24" lengthAdjust="spacingAndGlyphs" >3000</text>
<text x="31.3" y="156" font-size="12.4" fill="#000" text-anchor="start" textLength="24" lengthAdjust="spacingAndGlyphs" >2000</text>
<text x="31.3" y="182" font-size="12.4" fill="#000" text-anchor="start" textLength="24" lengthAdjust="spacingAndGlyphs" >1000</text>
<text x="31.3" y="227" font-size="12.4" fill="#000" text-anchor="start" textLength="24" lengthAdjust="spacingAndGlyphs" >1000</text>
<text x="37.3" y="254" font-size="12.4" fill="#000" text-anchor="start" textLength="18" lengthAdjust="spacingAndGlyphs" >800</text>
<text x="37.3" y="280" font-size="12.4" fill="#000" text-anchor="start" textLength="18" lengthAdjust="spacingAndGlyphs" >600</text>
<text x="37.3" y="306" font-size="12.4" fill="#000" text-anchor="start" textLength="18" lengthAdjust="spacingAndGlyphs" >400</text>
<text x="37.3" y="332" font-size="12.4" fill="#000" text-anchor="start" textLength="18" lengthAdjust="spacingAndGlyphs" >200</text>
<text x="55.949999999999996" y="217" font-size="12.4" fill="#000" text-anchor="start" textLength="15" lengthAdjust="spacingAndGlyphs" >0.0</text>
<text x="55.949999999999996" y="367" font-size="12.4" fill="#000" text-anchor="start" textLength="15" lengthAdjust="spacingAndGlyphs" >0.0</text>
<text x="107.8" y="217" font-size="12.4" fill="#000" text-anchor="start" textLength="15" lengthAdjust="spacingAndGlyphs" >0.5</text>
<text x="107.8" y="367" font-size="12.4" fill="#000" text-anchor="start" textLength="15" lengthAdjust="spacingAndGlyphs" >0.5</text>
<text x="159.65" y="217" font-size="12.4" fill="#000" text-anchor="start" textLength="15" lengthAdjust="spacingAndGlyphs" >1.0</text>
<text x="159.65" y="367" font-size="12.4" fill="#000" text-anchor="start" textLength="15" lengthAdjust="spacingAndGlyphs" >1.0</text>
<text x="211.50000000000003" y="217" font-size="12.4" fill="#000" text-anchor="start" textLength="15" lengthAdjust="spacingAndGlyphs" >1.5</text>
<text x="211.50000000000003" y="367" font-size="12.4" fill="#000" text-anchor="start" textLength="15" lengthAdjust="spacingAndGlyphs" >1.5</text>
<text x="263.35" y="217" font-size="12.4" fill="#000" text-anchor="start" textLength="15" lengthAdjust="spacingAndGlyphs" >2.0</text>
<text x="263.35" y="367" font-size="12.4" fill="#000" text-anchor="start" textLength="15" lengthAdjust="spacingAndGlyphs" >2.0</text>
<text x="315.2" y="217" font-size="12.4" fill="#000" text-anchor="start" textLength="15" lengthAdjust="spacingAndGlyphs" >2.5</text>
<text x="315.2" y="367" font-size="12.4" fill="#000" text-anchor="start" textLength="15" lengthAdjust="spacingAndGlyphs" >2.5</text>
<text x="367.05" y="217" font-size="12.4" fill="#000" text-anchor="start" textLength="15" lengthAdjust="spacingAndGlyphs" >3.0</text>
<text x="367.05" y="367" font-size="12.4" fill="#000" text-anchor="start" textLength="15" lengthAdjust="spacingAndGlyphs" >3.0</text>
<text x="418.9" y="217" font-size="12.4" fill="#000" text-anchor="start" textLength="15" lengthAdjust="spacingAndGlyphs" >3.5</text>
<text x="418.9" y="367" font-size="12.4" fill="#000" text-anchor="start" textLength="15" lengthAdjust="spacingAndGlyphs" >3.5</text>
<text x="470.75" y="217" font-size="12.4" fill="#000" text-anchor="start" textLength="15" lengthAdjust="spacingAndGlyphs" >4.0</text>
<text x="470.75" y="367" font-size="12.4" fill="#000" text-anchor="start" textLength="15" lengthAdjust="spacingAndGlyphs" >4.0</text>
<text x="522.6" y="217" font-size="12.4" fill="#000" text-anchor="start" textLength="15" lengthAdjust="spacingAndGlyphs" >4.5</text>
<text x="522.6" y="367" font-size="12.4" fill="#000" text-anchor="start" textLength="15" lengthAdjust="spacingAndGlyphs" >4.5</text>
<text x="532.8" y="193" font-size="12.4" fill="#000" text-anchor="start" textLength="6" lengthAdjust="spacingAndGlyphs" >2</text>
<rect x="531" y="189" width="2" height="1" fill="#000" />
<text x="532.8" y="177" font-size="12.4" fill="#000" text-anchor="start" textLength="6" lengthAdjust="spacingAndGlyphs" >4</text>
<rect x="531" y="173" width="2" height="1" fill="#000" />
<text x="532.8" y="162" font-size="12.4" fill="#000" text-anchor="start" textLength="6" lengthAdjust="spacingAndGlyphs" >6</text>
<rect x="531" y="158" width="2" height="1" fill="#000" />
<text x="532.8" y="146" font-size="12.4" fill="#000" text-anchor="start" textLength="6" lengthAdjust="spacingAndGlyphs" >8</text>
<rect x="531" y="142" width="2" height="1" fill="#000" />
<text x="532.8" y="131" font-size="12.4" fill="#000" text-anchor="start" textLength="12" lengthAdjust="spacingAndGlyphs" >10</text>
<rect x="531" y="127" width="2" height="1" fill="#000" />
<text x="532.8" y="116" font-size="12.4" fill="#000" text-anchor="start" textLength="12" lengthAdjust="spacingAndGlyphs" >12</text>
<rect x="531" y="112" width="2" height="1" fill="#000" />
<text x="532.8" y="100" font-size="12.4" fill="#000" text-anchor="start" textLength="12" lengthAdjust="spacingAndGlyphs" >14</text>
<rect x="531" y="96" width="2" height="1" fill="#000" />
<text x="532.8" y="85" font-size="12.4" fill="#000" text-anchor="start" textLength="12" lengthAdjust="spacingAndGlyphs" >16</text>
<rect x="531" y="81" width="2" height="1" fill="#000" />
<rect x="531" y="204" width="2" height="1" fill="#000" />
<rect x="529" y="196" width="2" height="1" fill="#00008c" />
<rect x="529" y="181" width="2" height="1" fill="#00008c" />
<rect x="529" y="166" width="2" height="1" fill="#00008c" />
<rect x="529" y="150" width="2" height="1" fill="#00008c" />
<rect x="529" y="135" width="2" height="1" fill="#00008c" />
<rect x="529" y="119" width="2" height="1" fill="#00008c" />
<rect x="529" y="104" width="2" height="1" fill="#00008c" />
<rect x="529" y="89" width="2" height="1" fill="#00008c" />
<rect x="529" y="73" width="2" height="1" fill="#00008c" />
<text x="532.8" y="227" font-size="12.4" fill="#000" text-anchor="start" textLength="12" lengthAdjust="spacingAndGlyphs" >40</text>
<text x="532.8" y="254" font-size="12.4" fill="#000" text-anchor="start" textLength="12" lengthAdjust="spacingAndGlyphs" >32</text>
<text x="532.8" y="280" font-size="12.4" fill="#000" text-anchor="start" textLength="12" lengthAdjust="spacingAndGlyphs" >24</text>
<text x="532.8" y="306" font-size="12.4" fill="#000" text-anchor="start" textLength="12" lengthAdjust="spacingAndGlyphs" >16</text>
<text x="532.8" y="332" font-size="12.4" fill="#000" text-anchor="start" textLength="6" lengthAdjust="spacingAndGlyphs" >8</text>
<rect x="18" y="374" width="170" height="1" fill="#808080" />
<rect x="18" y="436" width="170" height="1" fill="#808080" />
<rect x="18" y="374" width="1" height="63" fill="#808080" />
<rect x="187" y="374" width="1" height="63" fill="#808080" />
<rect x="28" y="371" width="62" height="8" fill="#ffffff" />
<rect x="28.5" y="371.5" width="7" height="7" fill="#00ffff" stroke="#000"/>
<text x="39.67" y="378" font-size="12" fill="#000" text-anchor="start" textLength="44.74" lengthAdjust="spacingAndGlyphs" >PI Errors</text>
<path d="M40 383h1v1h-1zM44 383h1v1h-1zM27 384h11v1h-11zM40 384h1v1h-1zM44 384h6v1h-6zM32 385h1v1h-1zM39 385h4v1h-4zM44 385h1v1h-1zM49 385h1v1h-1zM28 386h1v1h-1zM32 386h1v1h-1zM36 386h1v1h-1zM40 386h1v1h-1zM43 386h1v1h-1zM49 386h1v1h-1zM29 387h1v1h-1zM32 387h1v1h-1zM35 387h1v1h-1zM40 387h1v1h-1zM44 387h4v1h-4zM49 387h1v1h-1zM51 387h1v1h-1zM29 388h1v1h-1zM32 388h1v1h-1zM35 388h1v1h-1zM40 388h1v1h-1zM49 388h1v1h-1zM32 389h1v1h-1zM40 389h1v1h-1zM49 389h1v1h-1zM27 390h11v1h-11zM40 390h3v1h-3zM45 390h3v1h-3zM49 390h1v1h-1zM32 391h1v1h-1zM39 391h2v1h-2zM44 391h1v1h-1zM49 391h1v1h-1zM32 392h1v1h-1zM49 392h1v1h-1zM32 393h1v1h-1zM46 393h4v1h-4zM51 393h1v1h-1zM32 394h1v1h-1z" fill="#000"/>
<path d="M29 402h7v1h-7zM44 402h1v1h-1zM29 403h7v1h-7zM44 403h1v1h-1zM29 404h1v1h-1zM35 404h1v1h-1zM44 404h1v1h-1zM29 405h7v1h-7zM39 405h11v1h-11zM51 405h1v1h-1zM27 406h11v1h-11zM44 406h1v1h-1zM28 407h1v1h-1zM31 407h1v1h-1zM44 407h2v1h-2zM28 408h9v1h-9zM43 408h1v1h-1zM45 408h1v1h-1zM28 409h4v1h-4zM33 409h1v1h-1zM36 409h1v1h-1zM43 409h1v1h-1zM46 409h1v1h-1zM28 410h1v1h-1zM31 410h1v1h-1zM34 410h2v1h-2zM42 410h1v1h-1zM47 410h1v1h-1zM27 411h5v1h-5zM34 411h3v1h-3zM41 411h1v1h-1zM48 411h1v1h-1zM51 411h1v1h-1zM31 412h3v1h-3zM36 412h2v1h-2zM39 412h2v1h-2zM49 412h1v1h-1z" fill="#000"/>
<path d="M47 420h1v1h-1zM32 421h1v1h-1zM40 421h4v1h-4zM47 421h1v1h-1zM31 422h1v1h-1zM33 422h1v1h-1zM39 422h5v1h-5zM47 422h1v1h-1zM30 423h1v1h-1zM34 423h1v1h-1zM47 423h1v1h-1zM29 424h2v1h-2zM35 424h1v1h-1zM40 424h10v1h-10zM55 424h1v1h-1zM28 425h1v1h-1zM30 425h5v1h-5zM36 425h2v1h-2zM47 425h1v1h-1zM27 426h1v1h-1zM40 426h4v1h-4zM47 426h1v1h-1zM29 427h7v1h-7zM39 427h5v1h-5zM47 427h1v1h-1zM29 428h1v1h-1zM35 428h1v1h-1zM39 428h1v1h-1zM43 428h1v1h-1zM47 428h1v1h-1zM29 429h1v1h-1zM35 429h1v1h-1zM39 429h1v1h-1zM43 429h1v1h-1zM47 429h1v1h-1zM29 430h7v1h-7zM39 430h5v1h-5zM47 430h1v1h-1zM55 430h1v1h-1zM29 431h1v1h-1zM35 431h1v1h-1zM39 431h1v1h-1zM43 431h1v1h-1zM47 431h1v1h-1z" fill="#000"/>
<text x="143.17" y="393" font-size="12" fill="#000080" text-anchor="start" textLength="32.4" lengthAdjust="spacingAndGlyphs" >205.63</text>
<text x="150.13" y="412" font-size="12" fill="#000080" text-anchor="start" textLength="25.32" lengthAdjust="spacingAndGlyphs" >2070</text>
<text x="133.29" y="430" font-size="12" fill="#000080" text-anchor="start" textLength="42.03" lengthAdjust="spacingAndGlyphs" >3311624</text>
<rect x="198" y="374" width="170" height="1" fill="#808080" />
<rect x="198" y="436" width="170" height="1" fill="#808080" />
<rect x="198" y="374" width="1" height="63" fill="#808080" />
<rect x="367" y="374" width="1" height="63" fill="#808080" />
<rect x="208" y="371" width="72" height="8" fill="#ffffff" />
<rect x="208.5" y="371.5" width="7" height="7" fill="#ff0000" stroke="#000"/>
<text x="219.66" y="378" font-size="12" fill="#000" text-anchor="start" textLength="54.75" lengthAdjust="spacingAndGlyphs" >PI Failures</text>
<path d="M222 383h1v1h-1zM226 383h1v1h-1zM209 384h11v1h-11zM222 384h1v1h-1zM226 384h6v1h-6zM214 385h1v1h-1zM221 385h4v1h-4zM226 385h1v1h-1zM231 385h1v1h-1zM210 386h1v1h-1zM214 386h1v1h-1zM218 386h1v1h-1zM222 386h1v1h-1zM225 386h1v1h-1zM231 386h1v1h-1zM211 387h1v1h-1zM214 387h1v1h-1zM217 387h1v1h-1zM222 387h1v1h-1zM226 387h4v1h-4zM231 387h1v1h-1zM234 387h1v1h-1zM211 388h1v1h-1zM214 388h1v1h-1zM217 388h1v1h-1zM222 388h1v1h-1zM231 388h1v1h-1zM214 389h1v1h-1zM222 389h1v1h-1zM231 389h1v1h-1zM209 390h11v1h-11zM222 390h3v1h-3zM227 390h3v1h-3zM231 390h1v1h-1zM214 391h1v1h-1zM221 391h2v1h-2zM226 391h1v1h-1zM231 391h1v1h-1zM214 392h1v1h-1zM231 392h1v1h-1zM214 393h1v1h-1zM228 393h4v1h-4zM234 393h1v1h-1zM214 394h1v1h-1z" fill="#000"/>
<path d="M211 402h7v1h-7zM226 402h1v1h-1zM211 403h7v1h-7zM226 403h1v1h-1zM211 404h1v1h-1zM217 404h1v1h-1zM226 404h1v1h-1zM211 405h7v1h-7zM221 405h11v1h-11zM234 405h1v1h-1zM209 406h11v1h-11zM226 406h1v1h-1zM210 407h1v1h-1zM213 407h1v1h-1zM226 407h2v1h-2zM210 408h9v1h-9zM225 408h1v1h-1zM227 408h1v1h-1zM210 409h4v1h-4zM215 409h1v1h-1zM218 409h1v1h-1zM225 409h1v1h-1zM228 409h1v1h-1zM210 410h1v1h-1zM213 410h1v1h-1zM216 410h2v1h-2zM224 410h1v1h-1zM229 410h1v1h-1zM209 411h5v1h-5zM216 411h3v1h-3zM223 411h1v1h-1zM230 411h1v1h-1zM234 411h1v1h-1zM213 412h3v1h-3zM218 412h2v1h-2zM221 412h2v1h-2zM231 412h1v1h-1z" fill="#000"/>
<path d="M229 420h1v1h-1zM214 421h1v1h-1zM222 421h4v1h-4zM229 421h1v1h-1zM213 422h1v1h-1zM215 422h1v1h-1zM221 422h5v1h-5zM229 422h1v1h-1zM212 423h1v1h-1zM216 423h1v1h-1zM229 423h1v1h-1zM211 424h2v1h-2zM217 424h1v1h-1zM222 424h10v1h-10zM237 424h1v1h-1zM210 425h1v1h-1zM212 425h5v1h-5zM218 425h2v1h-2zM229 425h1v1h-1zM209 426h1v1h-1zM222 426h4v1h-4zM229 426h1v1h-1zM211 427h7v1h-7zM221 427h5v1h-5zM229 427h1v1h-1zM211 428h1v1h-1zM217 428h1v1h-1zM221 428h1v1h-1zM225 428h1v1h-1zM229 428h1v1h-1zM211 429h1v1h-1zM217 429h1v1h-1zM221 429h1v1h-1zM225 429h1v1h-1zM229 429h1v1h-1zM211 430h7v1h-7zM221 430h5v1h-5zM229 430h1v1h-1zM237 430h1v1h-1zM211 431h1v1h-1zM217 431h1v1h-1zM221 431h1v1h-1zM225 431h1v1h-1zM229 431h1v1h-1z" fill="#000"/>
<text x="331.3" y="393" font-size="12" fill="#000080" text-anchor="start" textLength="26.21" lengthAdjust="spacingAndGlyphs" >37.14</text>
<text x="338.24" y="412" font-size="12" fill="#000080" text-anchor="start" textLength="18.34" lengthAdjust="spacingAndGlyphs" >666</text>
<text x="321.27" y="430" font-size="12" fill="#000080" text-anchor="start" textLength="36.25" lengthAdjust="spacingAndGlyphs" >539814</text>
<rect x="379" y="374" width="170" height="1" fill="#808080" />
<rect x="379" y="420" width="170" height="1" fill="#808080" />
<rect x="379" y="374" width="1" height="47" fill="#808080" />
<rect x="548" y="374" width="1" height="47" fill="#808080" />
<rect x="389" y="371" width="39" height="8" fill="#ffffff" />
<rect x="389.5" y="371.5" width="7" height="7" fill="#ffff00" stroke="#000"/>
<text x="401.82" y="378" font-size="12" fill="#000" text-anchor="start" textLength="25.38" lengthAdjust="spacingAndGlyphs" >Jitter</text>
<path d="M402 383h1v1h-1zM406 383h1v1h-1zM389 384h11v1h-11zM402 384h1v1h-1zM406 384h6v1h-6zM394 385h1v1h-1zM401 385h4v1h-4zM406 385h1v1h-1zM411 385h1v1h-1zM390 386h1v1h-1zM394 386h1v1h-1zM398 386h1v1h-1zM402 386h1v1h-1zM405 386h1v1h-1zM411 386h1v1h-1zM391 387h1v1h-1zM394 387h1v1h-1zM397 387h1v1h-1zM402 387h1v1h-1zM406 387h4v1h-4zM411 387h1v1h-1zM414 387h1v1h-1zM391 388h1v1h-1zM394 388h1v1h-1zM397 388h1v1h-1zM402 388h1v1h-1zM411 388h1v1h-1zM394 389h1v1h-1zM402 389h1v1h-1zM411 389h1v1h-1zM389 390h11v1h-11zM402 390h3v1h-3zM407 390h3v1h-3zM411 390h1v1h-1zM394 391h1v1h-1zM401 391h2v1h-2zM406 391h1v1h-1zM411 391h1v1h-1zM394 392h1v1h-1zM411 392h1v1h-1zM394 393h1v1h-1zM408 393h4v1h-4zM414 393h1v1h-1zM394 394h1v1h-1z" fill="#000"/>
<path d="M391 402h7v1h-7zM406 402h1v1h-1zM391 403h7v1h-7zM406 403h1v1h-1zM391 404h1v1h-1zM397 404h1v1h-1zM406 404h1v1h-1zM391 405h7v1h-7zM401 405h11v1h-11zM414 405h1v1h-1zM389 406h11v1h-11zM406 406h1v1h-1zM390 407h1v1h-1zM393 407h1v1h-1zM406 407h2v1h-2zM390 408h9v1h-9zM405 408h1v1h-1zM407 408h1v1h-1zM390 409h4v1h-4zM395 409h1v1h-1zM398 409h1v1h-1zM405 409h1v1h-1zM408 409h1v1h-1zM390 410h1v1h-1zM393 410h1v1h-1zM396 410h2v1h-2zM404 410h1v1h-1zM409 410h1v1h-1zM389 411h5v1h-5zM396 411h3v1h-3zM403 411h1v1h-1zM410 411h1v1h-1zM414 411h1v1h-1zM393 412h3v1h-3zM398 412h2v1h-2zM401 412h2v1h-2zM411 412h1v1h-1z" fill="#000"/>
<text x="500.61" y="393" font-size="12" fill="#000080" text-anchor="start" textLength="38.16" lengthAdjust="spacingAndGlyphs" >11.12 %</text>
<text x="507.09" y="412" font-size="12" fill="#000080" text-anchor="start" textLength="31.67" lengthAdjust="spacingAndGlyphs" >22.7 %</text>
<text x="388.58" y="434" font-size="12" fill="#000" text-anchor="start" textLength="62.55" lengthAdjust="spacingAndGlyphs" >PO Failures:</text>
<text x="500.55" y="434" font-size="12" fill="#000080" text-anchor="start" textLength="37.24" lengthAdjust="spacingAndGlyphs" >130726</text>
<rect x="562.5" y="59.5" width="67" height="18" rx="2.5" fill="#ffffff" stroke="#00008c" stroke-width="1.4"/>
<rect x="564" y="69" width="64" height="7" fill="#c0c0c0" />
<rect x="654.5" y="59.5" width="67" height="18" rx="2.5" fill="#ffffff" stroke="#00008c" stroke-width="1.4"/>
<rect x="656" y="69" width="64" height="7" fill="#c0c0c0" />
<line x1="657" y1="61.5" x2="719" y2="61.5" stroke="#c00000" stroke-dasharray="1 1"/>
<line x1="657" y1="75.5" x2="719" y2="75.5" stroke="#808000" stroke-dasharray="1 1"/>
<line x1="656.5" y1="61" x2="656.5" y2="76" stroke="#000" stroke-dasharray="1 1"/>
<line x1="718.5" y1="61" x2="718.5" y2="76" stroke="#000" stroke-dasharray="1 1"/>
<path d="M584 62h5v1h-5zM590 62h5v1h-5zM597 62h1v1h-1zM602 62h1v1h-1zM584 63h5v1h-5zM590 63h5v1h-5zM597 63h1v1h-1zM602 63h1v1h-1zM604 63h1v1h-1zM584 64h1v1h-1zM588 64h1v1h-1zM590 64h1v1h-1zM594 64h1v1h-1zM596 64h4v1h-4zM602 64h1v1h-1zM604 64h1v1h-1zM584 65h5v1h-5zM590 65h5v1h-5zM597 65h1v1h-1zM599 65h1v1h-1zM601 65h1v1h-1zM605 65h1v1h-1zM584 66h1v1h-1zM594 66h1v1h-1zM597 66h1v1h-1zM599 66h8v1h-8zM584 67h1v1h-1zM586 67h7v1h-7zM594 67h1v1h-1zM597 67h1v1h-1zM599 67h1v1h-1zM584 68h1v1h-1zM588 68h1v1h-1zM590 68h1v1h-1zM594 68h1v1h-1zM596 68h1v1h-1zM599 68h1v1h-1zM601 68h5v1h-5zM584 69h1v1h-1zM586 69h7v1h-7zM594 69h1v1h-1zM596 69h3v1h-3zM601 69h1v1h-1zM605 69h1v1h-1zM584 70h1v1h-1zM588 70h1v1h-1zM590 70h1v1h-1zM594 70h1v1h-1zM598 70h2v1h-2zM601 70h1v1h-1zM605 70h1v1h-1zM584 71h1v1h-1zM587 71h1v1h-1zM590 71h1v1h-1zM594 71h1v1h-1zM597 71h1v1h-1zM601 71h5v1h-5zM584 72h1v1h-1zM586 72h1v1h-1zM592 72h3v1h-3zM596 72h1v1h-1zM601 72h1v1h-1zM605 72h1v1h-1z" fill="#000"/>
<path d="M670 62h1v1h-1zM675 62h1v1h-1zM669 63h1v1h-1zM674 63h5v1h-5zM682 63h9v1h-9zM668 64h2v1h-2zM671 64h1v1h-1zM674 64h1v1h-1zM677 64h1v1h-1zM689 64h1v1h-1zM669 65h2v1h-2zM673 65h1v1h-1zM675 65h1v1h-1zM677 65h1v1h-1zM687 65h2v1h-2zM670 66h2v1h-2zM676 66h1v1h-1zM686 66h1v1h-1zM668 67h5v1h-5zM675 67h1v1h-1zM677 67h1v1h-1zM686 67h1v1h-1zM670 68h1v1h-1zM673 68h2v1h-2zM678 68h2v1h-2zM686 68h1v1h-1zM668 69h1v1h-1zM670 69h2v1h-2zM676 69h2v1h-2zM686 69h1v1h-1zM668 70h1v1h-1zM670 70h1v1h-1zM672 70h1v1h-1zM674 70h1v1h-1zM686 70h1v1h-1zM668 71h1v1h-1zM670 71h1v1h-1zM675 71h2v1h-2zM686 71h1v1h-1zM670 72h1v1h-1zM677 72h2v1h-2zM686 72h1v1h-1zM684 73h3v1h-3z" fill="#000"/>
<path d="M697 62.5 Q691.5 67 697 72 M703 62.5 Q708.5 67 703 72 M695.5 62.5 L704.5 71.5 M704.5 62.5 L695.5 71.5" fill="none" stroke="#000" stroke-width="1.1" shape-rendering="geometricPrecision"/>
<rect x="696" y="73" width="8" height="1" fill="#000" />
<rect x="564" y="89" width="156" height="1" fill="#c0c0c0" />
<rect x="564" y="156" width="156" height="1" fill="#c0c0c0" />
<rect x="561" y="92" width="1" height="62" fill="#c0c0c0" />
<rect x="563" y="90" width="1" height="1" fill="#c0c0c0" />
<rect x="562" y="91" width="1" height="1" fill="#c0c0c0" />
<rect x="562" y="154" width="1" height="1" fill="#c0c0c0" />
<rect x="563" y="155" width="1" height="1" fill="#c0c0c0" />
<rect x="720" y="90" width="1" height="1" fill="#c0c0c0" />
<rect x="721" y="91" width="1" height="1" fill="#c0c0c0" />
<rect x="721" y="154" width="1" height="1" fill="#c0c0c0" />
<rect x="720" y="155" width="1" height="1" fill="#c0c0c0" />
<rect x="568" y="82" width="62" height="9" fill="#ffffff" />
<path d="M607 82h1v1h-1zM613 82h1v1h-1zM618 82h1v1h-1zM577 83h1v1h-1zM579 83h1v1h-1zM607 83h1v1h-1zM613 83h1v1h-1zM618 83h1v1h-1zM622 83h5v1h-5zM571 84h6v1h-6zM578 84h1v1h-1zM588 84h6v1h-6zM600 84h1v1h-1zM607 84h1v1h-1zM610 84h11v1h-11zM622 84h1v1h-1zM626 84h1v1h-1zM593 85h1v1h-1zM599 85h6v1h-6zM606 85h2v1h-2zM609 85h8v1h-8zM618 85h1v1h-1zM622 85h1v1h-1zM626 85h1v1h-1zM584 86h1v1h-1zM592 86h1v1h-1zM599 86h1v1h-1zM603 86h1v1h-1zM605 86h1v1h-1zM607 86h1v1h-1zM609 86h12v1h-12zM622 86h1v1h-1zM624 86h3v1h-3zM570 87h9v1h-9zM583 87h1v1h-1zM592 87h1v1h-1zM598 87h1v1h-1zM603 87h1v1h-1zM605 87h1v1h-1zM607 87h1v1h-1zM617 87h1v1h-1zM619 87h1v1h-1zM622 87h5v1h-5zM574 88h1v1h-1zM581 88h3v1h-3zM591 88h2v1h-2zM597 88h1v1h-1zM603 88h1v1h-1zM605 88h1v1h-1zM607 88h1v1h-1zM610 88h6v1h-6zM617 88h1v1h-1zM619 88h1v1h-1zM622 88h2v1h-2zM626 88h1v1h-1zM574 89h1v1h-1zM580 89h1v1h-1zM583 89h1v1h-1zM590 89h1v1h-1zM593 89h1v1h-1zM602 89h1v1h-1zM607 89h1v1h-1zM610 89h11v1h-11zM622 89h1v1h-1zM624 89h1v1h-1zM626 89h1v1h-1zM573 90h2v1h-2zM583 90h1v1h-1zM588 90h2v1h-2zM594 90h1v1h-1zM601 90h1v1h-1zM607 90h1v1h-1zM610 90h1v1h-1zM615 90h6v1h-6zM622 90h1v1h-1zM625 90h1v1h-1zM573 91h1v1h-1zM583 91h1v1h-1zM587 91h2v1h-2zM595 91h1v1h-1zM600 91h2v1h-2zM607 91h1v1h-1zM610 91h6v1h-6zM618 91h1v1h-1zM622 91h1v1h-1zM625 91h1v1h-1zM571 92h2v1h-2zM583 92h1v1h-1zM598 92h2v1h-2zM607 92h1v1h-1zM610 92h1v1h-1zM615 92h1v1h-1zM618 92h1v1h-1zM622 92h1v1h-1zM624 92h1v1h-1zM626 92h1v1h-1zM607 93h1v1h-1zM610 93h1v1h-1zM614 93h2v1h-2zM618 93h1v1h-1zM622 93h2v1h-2zM627 93h1v1h-1z" fill="#0000ff"/>
<path d="M572 95h1v1h-1zM584 95h1v1h-1zM593 95h3v1h-3zM571 96h6v1h-6zM584 96h1v1h-1zM593 96h3v1h-3zM571 97h1v1h-1zM576 97h1v1h-1zM583 97h1v1h-1zM586 97h8v1h-8zM570 98h2v1h-2zM575 98h1v1h-1zM581 98h2v1h-2zM593 98h1v1h-1zM595 98h1v1h-1zM569 99h2v1h-2zM572 99h1v1h-1zM575 99h1v1h-1zM580 99h3v1h-3zM592 99h1v1h-1zM569 100h1v1h-1zM573 100h2v1h-2zM578 100h2v1h-2zM582 100h1v1h-1zM592 100h1v1h-1zM573 101h2v1h-2zM582 101h1v1h-1zM591 101h1v1h-1zM572 102h2v1h-2zM582 102h1v1h-1zM590 102h2v1h-2zM571 103h2v1h-2zM582 103h1v1h-1zM589 103h2v1h-2zM570 104h1v1h-1zM582 104h1v1h-1zM587 104h2v1h-2zM595 104h1v1h-1z" fill="#000"/>
<text x="567.97" y="121" font-size="12" fill="#000" text-anchor="start" textLength="14.25" lengthAdjust="spacingAndGlyphs" >ID:</text>
<path d="M583 125h1v1h-1zM589 125h1v1h-1zM569 126h9v1h-9zM582 126h1v1h-1zM589 126h1v1h-1zM569 127h1v1h-1zM577 127h1v1h-1zM582 127h1v1h-1zM584 127h8v1h-8zM569 128h1v1h-1zM577 128h1v1h-1zM581 128h2v1h-2zM589 128h1v1h-1zM569 129h1v1h-1zM577 129h1v1h-1zM581 129h2v1h-2zM585 129h1v1h-1zM589 129h1v1h-1zM593 129h1v1h-1zM569 130h9v1h-9zM580 130h1v1h-1zM582 130h1v1h-1zM586 130h1v1h-1zM589 130h1v1h-1zM569 131h1v1h-1zM577 131h1v1h-1zM582 131h1v1h-1zM586 131h1v1h-1zM589 131h1v1h-1zM569 132h1v1h-1zM577 132h1v1h-1zM582 132h1v1h-1zM589 132h1v1h-1zM569 133h1v1h-1zM577 133h1v1h-1zM582 133h1v1h-1zM589 133h1v1h-1zM569 134h1v1h-1zM577 134h1v1h-1zM582 134h1v1h-1zM589 134h1v1h-1zM569 135h9v1h-9zM582 135h1v1h-1zM587 135h3v1h-3zM593 135h1v1h-1zM569 136h1v1h-1zM577 136h1v1h-1z" fill="#000"/>
<text x="568.09" y="150" font-size="12" fill="#000" text-anchor="start" textLength="30.33" lengthAdjust="spacingAndGlyphs" >Label:</text>
<text x="616.39" y="106" font-size="12" fill="#000080" text-anchor="start" textLength="38.88" lengthAdjust="spacingAndGlyphs" >DVD-R</text>
<text x="616.99" y="121" font-size="12" fill="#000080" text-anchor="start" textLength="39.01" lengthAdjust="spacingAndGlyphs" >GSC001</text>
<text x="616.65" y="136" font-size="12" fill="#000080" text-anchor="start" textLength="97.51" lengthAdjust="spacingAndGlyphs" >12 September 2005</text>
<text x="616.97" y="150" font-size="12" fill="#000080" text-anchor="start" textLength="72.95" lengthAdjust="spacingAndGlyphs" >CDS_TEST_B2</text>
<rect x="564" y="161" width="156" height="1" fill="#c0c0c0" />
<rect x="564" y="339" width="156" height="1" fill="#c0c0c0" />
<rect x="561" y="164" width="1" height="173" fill="#c0c0c0" />
<rect x="563" y="162" width="1" height="1" fill="#c0c0c0" />
<rect x="562" y="163" width="1" height="1" fill="#c0c0c0" />
<rect x="562" y="337" width="1" height="1" fill="#c0c0c0" />
<rect x="563" y="338" width="1" height="1" fill="#c0c0c0" />
<rect x="720" y="162" width="1" height="1" fill="#c0c0c0" />
<rect x="721" y="163" width="1" height="1" fill="#c0c0c0" />
<rect x="721" y="337" width="1" height="1" fill="#c0c0c0" />
<rect x="720" y="338" width="1" height="1" fill="#c0c0c0" />
<rect x="568" y="155" width="45" height="9" fill="#ffffff" />
<text x="569.07" y="165" font-size="12" fill="#0000ff" text-anchor="start" textLength="42.46" lengthAdjust="spacingAndGlyphs" >Settings</text>
<path d="M571 174h1v1h-1zM582 174h1v1h-1zM586 174h1v1h-1zM589 174h1v1h-1zM600 174h1v1h-1zM610 174h1v1h-1zM571 175h1v1h-1zM575 175h5v1h-5zM582 175h2v1h-2zM586 175h1v1h-1zM588 175h1v1h-1zM594 175h1v1h-1zM600 175h1v1h-1zM610 175h1v1h-1zM569 176h5v1h-5zM583 176h1v1h-1zM585 176h7v1h-7zM594 176h1v1h-1zM596 176h8v1h-8zM606 176h10v1h-10zM571 177h1v1h-1zM587 177h1v1h-1zM595 177h1v1h-1zM600 177h1v1h-1zM606 177h1v1h-1zM609 177h1v1h-1zM612 177h1v1h-1zM569 178h5v1h-5zM581 178h11v1h-11zM597 178h6v1h-6zM606 178h10v1h-10zM569 179h11v1h-11zM583 179h1v1h-1zM587 179h1v1h-1zM593 179h3v1h-3zM597 179h1v1h-1zM600 179h1v1h-1zM602 179h1v1h-1zM606 179h1v1h-1zM609 179h1v1h-1zM612 179h1v1h-1zM569 180h1v1h-1zM571 180h1v1h-1zM573 180h1v1h-1zM576 180h1v1h-1zM583 180h1v1h-1zM587 180h3v1h-3zM595 180h1v1h-1zM597 180h6v1h-6zM606 180h1v1h-1zM609 180h4v1h-4zM569 181h5v1h-5zM576 181h1v1h-1zM583 181h1v1h-1zM586 181h1v1h-1zM589 181h2v1h-2zM595 181h1v1h-1zM599 181h2v1h-2zM606 181h8v1h-8zM571 182h1v1h-1zM576 182h1v1h-1zM578 182h1v1h-1zM583 182h1v1h-1zM585 182h1v1h-1zM591 182h1v1h-1zM595 182h1v1h-1zM598 182h1v1h-1zM600 182h3v1h-3zM606 182h1v1h-1zM609 182h1v1h-1zM612 182h2v1h-2zM569 183h5v1h-5zM576 183h1v1h-1zM579 183h1v1h-1zM581 183h2v1h-2zM584 183h8v1h-8zM595 183h1v1h-1zM597 183h1v1h-1zM600 183h1v1h-1zM606 183h1v1h-1zM610 183h3v1h-3zM571 184h1v1h-1zM575 184h1v1h-1zM577 184h3v1h-3zM593 184h2v1h-2zM596 184h8v1h-8zM605 184h1v1h-1zM610 184h3v1h-3zM571 185h1v1h-1zM574 185h3v1h-3zM593 185h1v1h-1zM605 185h1v1h-1zM607 185h3v1h-3zM613 185h3v1h-3z" fill="#000"/>
<path d="M569 199h5v1h-5zM575 199h5v1h-5zM582 199h1v1h-1zM587 199h1v1h-1zM569 200h5v1h-5zM575 200h5v1h-5zM582 200h1v1h-1zM587 200h1v1h-1zM589 200h1v1h-1zM569 201h1v1h-1zM573 201h1v1h-1zM575 201h1v1h-1zM579 201h1v1h-1zM581 201h4v1h-4zM587 201h1v1h-1zM589 201h1v1h-1zM569 202h5v1h-5zM575 202h5v1h-5zM582 202h1v1h-1zM584 202h1v1h-1zM586 202h1v1h-1zM590 202h1v1h-1zM569 203h1v1h-1zM579 203h1v1h-1zM582 203h1v1h-1zM584 203h8v1h-8zM569 204h1v1h-1zM571 204h7v1h-7zM579 204h1v1h-1zM582 204h1v1h-1zM584 204h1v1h-1zM569 205h1v1h-1zM573 205h1v1h-1zM575 205h1v1h-1zM579 205h1v1h-1zM581 205h1v1h-1zM584 205h1v1h-1zM586 205h5v1h-5zM569 206h1v1h-1zM571 206h7v1h-7zM579 206h1v1h-1zM581 206h3v1h-3zM586 206h1v1h-1zM590 206h1v1h-1zM569 207h1v1h-1zM573 207h1v1h-1zM575 207h1v1h-1zM579 207h1v1h-1zM583 207h2v1h-2zM586 207h1v1h-1zM590 207h1v1h-1zM569 208h1v1h-1zM572 208h1v1h-1zM575 208h1v1h-1zM579 208h1v1h-1zM582 208h1v1h-1zM586 208h5v1h-5zM569 209h1v1h-1zM571 209h1v1h-1zM577 209h3v1h-3zM581 209h1v1h-1zM586 209h1v1h-1zM590 209h1v1h-1z" fill="#000"/>
<path d="M571 222h1v1h-1zM576 222h1v1h-1zM596 222h1v1h-1zM600 222h1v1h-1zM570 223h1v1h-1zM575 223h5v1h-5zM582 223h9v1h-9zM595 223h1v1h-1zM600 223h1v1h-1zM606 223h9v1h-9zM569 224h2v1h-2zM572 224h1v1h-1zM575 224h1v1h-1zM578 224h1v1h-1zM589 224h1v1h-1zM595 224h1v1h-1zM597 224h8v1h-8zM606 224h1v1h-1zM609 224h1v1h-1zM611 224h1v1h-1zM614 224h1v1h-1zM570 225h2v1h-2zM574 225h1v1h-1zM576 225h1v1h-1zM578 225h1v1h-1zM587 225h2v1h-2zM595 225h1v1h-1zM606 225h9v1h-9zM571 226h2v1h-2zM577 226h1v1h-1zM586 226h1v1h-1zM594 226h2v1h-2zM598 226h1v1h-1zM602 226h1v1h-1zM605 226h11v1h-11zM569 227h5v1h-5zM576 227h1v1h-1zM578 227h1v1h-1zM586 227h1v1h-1zM593 227h1v1h-1zM595 227h1v1h-1zM598 227h1v1h-1zM602 227h1v1h-1zM606 227h1v1h-1zM608 227h7v1h-7zM571 228h1v1h-1zM574 228h2v1h-2zM579 228h2v1h-2zM586 228h1v1h-1zM595 228h1v1h-1zM598 228h1v1h-1zM602 228h1v1h-1zM606 228h1v1h-1zM608 228h1v1h-1zM614 228h1v1h-1zM569 229h1v1h-1zM571 229h2v1h-2zM577 229h2v1h-2zM586 229h1v1h-1zM595 229h1v1h-1zM599 229h1v1h-1zM601 229h2v1h-2zM606 229h1v1h-1zM608 229h7v1h-7zM569 230h1v1h-1zM571 230h1v1h-1zM573 230h1v1h-1zM575 230h1v1h-1zM586 230h1v1h-1zM595 230h1v1h-1zM601 230h1v1h-1zM606 230h1v1h-1zM608 230h7v1h-7zM569 231h1v1h-1zM571 231h1v1h-1zM576 231h2v1h-2zM586 231h1v1h-1zM595 231h1v1h-1zM597 231h8v1h-8zM606 231h1v1h-1zM608 231h7v1h-7zM571 232h1v1h-1zM578 232h2v1h-2zM586 232h1v1h-1zM595 232h1v1h-1zM606 232h10v1h-10zM584 233h3v1h-3zM606 233h1v1h-1z" fill="#000"/>
<rect x="631.5" y="170.5" width="81" height="19" fill="#fff" stroke="#808080"/>
<rect x="695.5" y="171.5" width="16" height="17" fill="#c0c0c0" stroke="#909090"/>
<rect x="696" y="172" width="15" height="6" fill="#ffffff" />
<rect x="696" y="172" width="1" height="16" fill="#ffffff" />
<rect x="696" y="187" width="15" height="1" fill="#ffffff" />
<path d="M699.5 177.5 L703.5 181.5 L707.5 177.5" fill="none" stroke="#000" stroke-width="2.3" shape-rendering="geometricPrecision"/>
<text x="634.73" y="184" font-size="12" fill="#000" text-anchor="start" textLength="17.62" lengthAdjust="spacingAndGlyphs" >4 X</text>
<rect x="631.5" y="194.5" width="69" height="17" fill="#fff" stroke="#808080"/>
<text x="633.26" y="207" font-size="12" fill="#000" text-anchor="start" textLength="45.34" lengthAdjust="spacingAndGlyphs" >0000 MB</text>
<rect x="631.5" y="217.5" width="69" height="17" fill="#fff" stroke="#808080"/>
<text x="633.44" y="230" font-size="12" fill="#000" text-anchor="start" textLength="45.15" lengthAdjust="spacingAndGlyphs" >4489 MB</text>
<rect x="569.5" y="242.5" width="12" height="12" fill="#fff" stroke="#008080" stroke-width="1.3"/>
<path d="M571 244 L575 244 L571 248 Z" fill="#b0b0b0"/>
<text x="584.46" y="253" font-size="12" fill="#000" text-anchor="start" textLength="57.87" lengthAdjust="spacingAndGlyphs" >Quick Scan</text>
<rect x="569.5" y="261.5" width="12" height="12" fill="#fff" stroke="#008080" stroke-width="1.3"/>
<path d="M571 263 L575 263 L571 267 Z" fill="#b0b0b0"/>
<path d="M572 267 L574.5 270 L579 264.5" fill="none" stroke="#008000" stroke-width="2"/>
<text x="584.48" y="272" font-size="12" fill="#000" text-anchor="start" textLength="68.21" lengthAdjust="spacingAndGlyphs" >Show C1/PIE</text>
<rect x="569.5" y="276.5" width="12" height="12" fill="#fff" stroke="#008080" stroke-width="1.3"/>
<path d="M571 278 L575 278 L571 282 Z" fill="#b0b0b0"/>
<path d="M572 282 L574.5 285 L579 279.5" fill="none" stroke="#008000" stroke-width="2"/>
<text x="584.47" y="287" font-size="12" fill="#000" text-anchor="start" textLength="68.19" lengthAdjust="spacingAndGlyphs" >Show C2/PIF</text>
<rect x="569.5" y="291.5" width="12" height="12" fill="#fff" stroke="#008080" stroke-width="1.3"/>
<path d="M571 293 L575 293 L571 297 Z" fill="#b0b0b0"/>
<path d="M572 297 L574.5 300 L579 294.5" fill="none" stroke="#008000" stroke-width="2"/>
<text x="584.47" y="302" font-size="12" fill="#000" text-anchor="start" textLength="58.03" lengthAdjust="spacingAndGlyphs" >Show Jitter</text>
<rect x="569.5" y="306.5" width="12" height="12" fill="#fff" stroke="#008080" stroke-width="1.3"/>
<path d="M571 308 L575 308 L571 312 Z" fill="#b0b0b0"/>
<path d="M572 312 L574.5 315 L579 309.5" fill="none" stroke="#008000" stroke-width="2"/>
<text x="584.5" y="317" font-size="12" fill="#000" text-anchor="start" textLength="92.11" lengthAdjust="spacingAndGlyphs" >Show Read Speed</text>
<rect x="569.5" y="321.5" width="12" height="12" fill="#fff" stroke="#b0b0b0" stroke-width="1.3"/>
<path d="M571 323 L575 323 L571 327 Z" fill="#b0b0b0"/>
<path d="M572 327 L574.5 330 L579 324.5" fill="none" stroke="#c0c0c0" stroke-width="2"/>
<text x="584.49" y="332" font-size="12" fill="#a0a0a0" text-anchor="start" textLength="92.12" lengthAdjust="spacingAndGlyphs" >Show Write Speed</text>
<rect x="564" y="344" width="156" height="1" fill="#c0c0c0" />
<rect x="564" y="367" width="156" height="1" fill="#c0c0c0" />
<rect x="561" y="347" width="1" height="18" fill="#c0c0c0" />
<rect x="563" y="345" width="1" height="1" fill="#c0c0c0" />
<rect x="562" y="346" width="1" height="1" fill="#c0c0c0" />
<rect x="562" y="365" width="1" height="1" fill="#c0c0c0" />
<rect x="563" y="366" width="1" height="1" fill="#c0c0c0" />
<rect x="720" y="345" width="1" height="1" fill="#c0c0c0" />
<rect x="721" y="346" width="1" height="1" fill="#c0c0c0" />
<rect x="721" y="365" width="1" height="1" fill="#c0c0c0" />
<rect x="720" y="366" width="1" height="1" fill="#c0c0c0" />
<path d="M581 350h4v1h-4zM586 350h4v1h-4zM571 351h7v1h-7zM581 351h1v1h-1zM586 351h1v1h-1zM571 352h1v1h-1zM577 352h1v1h-1zM581 352h4v1h-4zM586 352h5v1h-5zM592 352h6v1h-6zM610 352h9v1h-9zM571 353h1v1h-1zM577 353h1v1h-1zM581 353h1v1h-1zM583 353h1v1h-1zM586 353h1v1h-1zM588 353h1v1h-1zM597 353h1v1h-1zM601 353h8v1h-8zM618 353h1v1h-1zM571 354h7v1h-7zM581 354h1v1h-1zM583 354h1v1h-1zM585 354h1v1h-1zM588 354h1v1h-1zM596 354h1v1h-1zM608 354h1v1h-1zM614 354h1v1h-1zM617 354h1v1h-1zM619 354h1v1h-1zM580 355h1v1h-1zM582 355h8v1h-8zM596 355h1v1h-1zM608 355h1v1h-1zM614 355h1v1h-1zM616 355h1v1h-1zM569 356h5v1h-5zM575 356h5v1h-5zM582 356h8v1h-8zM595 356h2v1h-2zM608 356h1v1h-1zM614 356h1v1h-1zM569 357h1v1h-1zM573 357h1v1h-1zM575 357h1v1h-1zM579 357h1v1h-1zM582 357h8v1h-8zM594 357h1v1h-1zM597 357h1v1h-1zM608 357h1v1h-1zM613 357h1v1h-1zM569 358h1v1h-1zM573 358h1v1h-1zM575 358h1v1h-1zM579 358h1v1h-1zM582 358h1v1h-1zM589 358h1v1h-1zM592 358h2v1h-2zM598 358h1v1h-1zM608 358h1v1h-1zM613 358h1v1h-1zM569 359h1v1h-1zM573 359h1v1h-1zM575 359h1v1h-1zM579 359h1v1h-1zM582 359h8v1h-8zM591 359h2v1h-2zM599 359h1v1h-1zM601 359h8v1h-8zM612 359h1v1h-1zM569 360h5v1h-5zM575 360h5v1h-5zM583 360h1v1h-1zM587 360h2v1h-2zM608 360h1v1h-1zM611 360h1v1h-1zM619 360h1v1h-1zM569 361h1v1h-1zM573 361h1v1h-1zM575 361h1v1h-1zM579 361h4v1h-4zM589 361h2v1h-2z" fill="#000"/>
<text x="700.26" y="361" font-size="12" fill="#000080" text-anchor="start" textLength="6.28" lengthAdjust="spacingAndGlyphs" >0</text>
<rect x="564" y="374" width="156" height="1" fill="#c0c0c0" />
<rect x="564" y="436" width="156" height="1" fill="#c0c0c0" />
<rect x="561" y="377" width="1" height="57" fill="#c0c0c0" />
<rect x="563" y="375" width="1" height="1" fill="#c0c0c0" />
<rect x="562" y="376" width="1" height="1" fill="#c0c0c0" />
<rect x="562" y="434" width="1" height="1" fill="#c0c0c0" />
<rect x="563" y="435" width="1" height="1" fill="#c0c0c0" />
<rect x="720" y="375" width="1" height="1" fill="#c0c0c0" />
<rect x="721" y="376" width="1" height="1" fill="#c0c0c0" />
<rect x="721" y="434" width="1" height="1" fill="#c0c0c0" />
<rect x="720" y="435" width="1" height="1" fill="#c0c0c0" />
<path d="M574 382h1v1h-1zM577 382h1v1h-1zM570 383h1v1h-1zM573 383h1v1h-1zM576 383h1v1h-1zM596 383h1v1h-1zM606 383h1v1h-1zM609 383h6v1h-6zM571 384h1v1h-1zM573 384h7v1h-7zM583 384h1v1h-1zM586 384h6v1h-6zM596 384h1v1h-1zM601 384h1v1h-1zM607 384h1v1h-1zM609 384h1v1h-1zM614 384h1v1h-1zM572 385h2v1h-2zM576 385h1v1h-1zM582 385h1v1h-1zM596 385h1v1h-1zM601 385h1v1h-1zM603 385h1v1h-1zM609 385h1v1h-1zM614 385h1v1h-1zM572 386h7v1h-7zM581 386h1v1h-1zM584 386h1v1h-1zM594 386h1v1h-1zM596 386h1v1h-1zM601 386h1v1h-1zM605 386h2v1h-2zM609 386h1v1h-1zM614 386h1v1h-1zM569 387h3v1h-3zM573 387h1v1h-1zM576 387h1v1h-1zM583 387h1v1h-1zM585 387h7v1h-7zM594 387h1v1h-1zM596 387h1v1h-1zM598 387h7v1h-7zM606 387h2v1h-2zM609 387h6v1h-6zM617 387h1v1h-1zM571 388h1v1h-1zM573 388h1v1h-1zM576 388h1v1h-1zM583 388h1v1h-1zM589 388h1v1h-1zM595 388h2v1h-2zM601 388h1v1h-1zM610 388h1v1h-1zM612 388h1v1h-1zM571 389h1v1h-1zM573 389h6v1h-6zM582 389h2v1h-2zM589 389h1v1h-1zM596 389h1v1h-1zM601 389h1v1h-1zM607 389h1v1h-1zM610 389h1v1h-1zM612 389h1v1h-1zM571 390h1v1h-1zM573 390h1v1h-1zM576 390h1v1h-1zM581 390h1v1h-1zM583 390h1v1h-1zM589 390h1v1h-1zM595 390h2v1h-2zM600 390h1v1h-1zM602 390h1v1h-1zM607 390h1v1h-1zM610 390h1v1h-1zM612 390h1v1h-1zM571 391h1v1h-1zM573 391h7v1h-7zM583 391h1v1h-1zM589 391h1v1h-1zM593 391h2v1h-2zM596 391h1v1h-1zM600 391h1v1h-1zM602 391h1v1h-1zM606 391h1v1h-1zM609 391h1v1h-1zM612 391h1v1h-1zM615 391h1v1h-1zM570 392h1v1h-1zM572 392h8v1h-8zM583 392h1v1h-1zM589 392h1v1h-1zM596 392h1v1h-1zM599 392h2v1h-2zM603 392h1v1h-1zM605 392h1v1h-1zM608 392h2v1h-2zM612 392h1v1h-1zM615 392h1v1h-1zM569 393h1v1h-1zM583 393h1v1h-1zM589 393h1v1h-1zM596 393h1v1h-1zM598 393h2v1h-2zM603 393h3v1h-3zM608 393h1v1h-1zM612 393h3v1h-3zM617 393h1v1h-1zM583 394h1v1h-1zM587 394h3v1h-3zM596 394h1v1h-1zM598 394h1v1h-1zM604 394h1v1h-1z" fill="#000"/>
<path d="M576 403h3v1h-3zM587 403h1v1h-1zM573 404h1v1h-1zM576 404h1v1h-1zM578 404h1v1h-1zM581 404h1v1h-1zM586 404h1v1h-1zM588 404h1v1h-1zM591 404h1v1h-1zM605 404h2v1h-2zM573 405h1v1h-1zM576 405h3v1h-3zM581 405h2v1h-2zM586 405h1v1h-1zM591 405h2v1h-2zM607 405h1v1h-1zM612 405h2v1h-2zM569 406h9v1h-9zM579 406h1v1h-1zM589 406h1v1h-1zM598 406h6v1h-6zM612 406h1v1h-1zM614 406h1v1h-1zM573 407h1v1h-1zM579 407h2v1h-2zM587 407h1v1h-1zM589 407h2v1h-2zM597 407h1v1h-1zM603 407h1v1h-1zM611 407h1v1h-1zM570 408h1v1h-1zM573 408h1v1h-1zM575 408h2v1h-2zM586 408h1v1h-1zM596 408h1v1h-1zM603 408h1v1h-1zM610 408h2v1h-2zM570 409h1v1h-1zM573 409h1v1h-1zM576 409h1v1h-1zM585 409h1v1h-1zM595 409h1v1h-1zM599 409h5v1h-5zM609 409h2v1h-2zM569 410h2v1h-2zM573 410h1v1h-1zM577 410h1v1h-1zM583 410h2v1h-2zM593 410h2v1h-2zM603 410h1v1h-1zM607 410h2v1h-2zM569 411h1v1h-1zM573 411h1v1h-1zM577 411h1v1h-1zM581 411h3v1h-3zM591 411h3v1h-3zM598 411h6v1h-6zM606 411h1v1h-1zM571 412h3v1h-3zM580 412h2v1h-2zM590 412h2v1h-2zM603 412h1v1h-1zM614 412h1v1h-1z" fill="#000"/>
<path d="M576 419h1v1h-1zM586 419h1v1h-1zM570 420h1v1h-1zM576 420h1v1h-1zM586 420h1v1h-1zM570 421h1v1h-1zM572 421h8v1h-8zM582 421h10v1h-10zM571 422h1v1h-1zM576 422h1v1h-1zM582 422h1v1h-1zM585 422h1v1h-1zM588 422h1v1h-1zM573 423h6v1h-6zM582 423h10v1h-10zM594 423h1v1h-1zM569 424h3v1h-3zM573 424h1v1h-1zM576 424h1v1h-1zM578 424h1v1h-1zM582 424h1v1h-1zM585 424h1v1h-1zM588 424h1v1h-1zM571 425h1v1h-1zM573 425h6v1h-6zM582 425h1v1h-1zM585 425h4v1h-4zM571 426h1v1h-1zM575 426h2v1h-2zM582 426h8v1h-8zM571 427h1v1h-1zM574 427h1v1h-1zM576 427h3v1h-3zM582 427h1v1h-1zM585 427h1v1h-1zM588 427h2v1h-2zM571 428h1v1h-1zM573 428h1v1h-1zM576 428h1v1h-1zM582 428h1v1h-1zM586 428h3v1h-3zM569 429h2v1h-2zM572 429h8v1h-8zM581 429h1v1h-1zM586 429h3v1h-3zM594 429h1v1h-1zM569 430h1v1h-1zM581 430h1v1h-1zM583 430h3v1h-3zM589 430h3v1h-3z" fill="#000"/>
<text x="677.79" y="392.5" font-size="12" fill="#000080" text-anchor="start" textLength="30.09" lengthAdjust="spacingAndGlyphs" >100 %</text>
<text x="661.74" y="411" font-size="12" fill="#000080" text-anchor="start" textLength="44.95" lengthAdjust="spacingAndGlyphs" >4488 MB</text>
<text x="676.35" y="429" font-size="12" fill="#000080" text-anchor="start" textLength="31.99" lengthAdjust="spacingAndGlyphs" >4.16 X</text>
</svg>
</body></html>
